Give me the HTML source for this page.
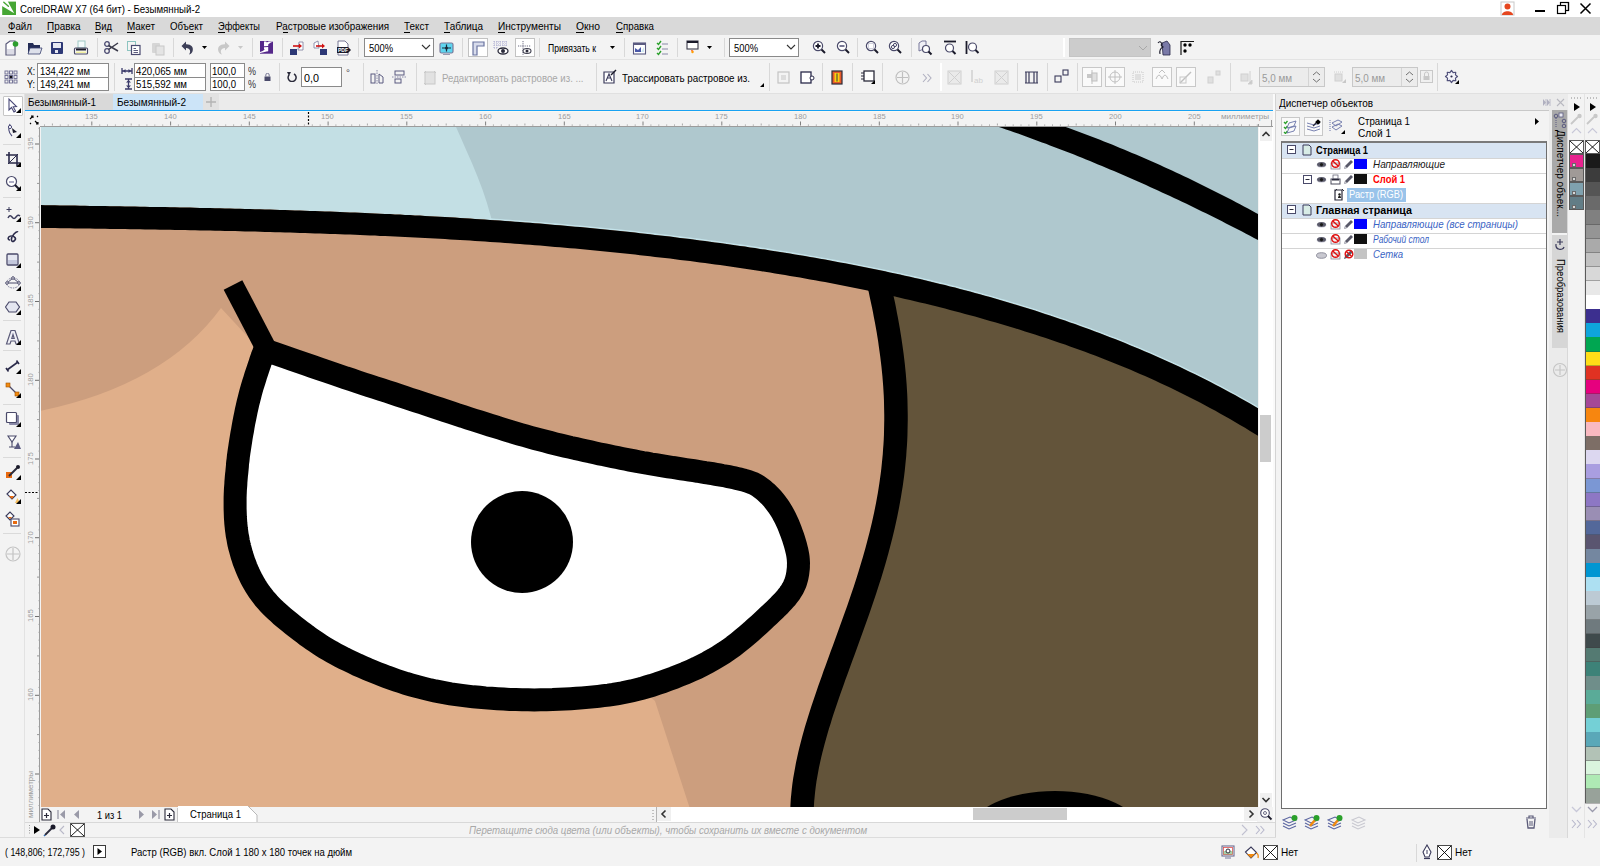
<!DOCTYPE html>
<html><head><meta charset="utf-8"><style>
html,body{margin:0;padding:0;}
body{width:1600px;height:866px;overflow:hidden;position:relative;background:#f3f3f3;font-family:"Liberation Sans",sans-serif;}
.r{position:absolute;}
.t{position:absolute;white-space:nowrap;transform-origin:0 0;}
u{text-decoration:underline;text-underline-offset:1px;}
</style></head><body>
<div class="r" style="left:0px;top:0px;width:1600px;height:17px;background:#fff;"></div>
<svg class="r" style="left:0px;top:0px;" width="18" height="17" viewBox="0 0 18 17"><rect x="2.2" y="1.6" width="13.8" height="13.4" fill="#46a634"/><path d="M1.5,1 L7.6,1 L14.2,13.3 L1.5,5.8 Z" fill="#fff"/><path d="M3.8,2.3 L8.4,6.2" stroke="#46a634" stroke-width="1.4" stroke-linecap="round"/></svg>
<div class="t" style="left:20px;top:3.61px;font-size:10.5px;line-height:10.5px;color:#000;font-weight:normal;font-style:normal;transform:scaleX(0.9223);">CorelDRAW X7 (64 бит) - Безымянный-2</div>
<svg class="r" style="left:1500px;top:1px;" width="16" height="15" viewBox="0 0 16 15"><rect x="1" y="1" width="13" height="13" fill="#fff" stroke="#c8c8c8"/><circle cx="7.5" cy="5.5" r="3" fill="#e5461f"/><path d="M2,14 C2,9 13,9 13,14 Z" fill="#e5461f"/></svg>
<div class="r" style="left:1535px;top:10px;width:10px;height:2px;background:#000;"></div>
<svg class="r" style="left:1555px;top:1px;" width="16" height="15" viewBox="0 0 16 15"><rect x="5.5" y="1.5" width="8" height="8" fill="#fff" stroke="#000" stroke-width="1.2"/><rect x="2.5" y="4.5" width="8" height="8" fill="#fff" stroke="#000" stroke-width="1.2"/><path d="M5.5,1.5 H13.5 V9.5" fill="none" stroke="#000" stroke-width="1.2"/></svg>
<svg class="r" style="left:1578px;top:1px;" width="16" height="15" viewBox="0 0 16 15"><path d="M2.5,2.5 L12.5,12.5 M12.5,2.5 L2.5,12.5" stroke="#000" stroke-width="1.5"/></svg>
<div class="r" style="left:0px;top:17px;width:1600px;height:18px;background:#d9d9d9;"></div>
<div class="t" style="left:7.5px;top:21.11px;font-size:10.5px;line-height:10.5px;color:#000;font-weight:normal;font-style:normal;transform:scaleX(0.9297);">Файл</div>
<div class="r" style="left:7.5px;top:31.5px;width:7.4px;height:1px;background:#000;"></div>
<div class="t" style="left:46.5px;top:21.11px;font-size:10.5px;line-height:10.5px;color:#000;font-weight:normal;font-style:normal;transform:scaleX(0.9445);">Правка</div>
<div class="r" style="left:46.5px;top:31.5px;width:7.1px;height:1px;background:#000;"></div>
<div class="t" style="left:95px;top:21.11px;font-size:10.5px;line-height:10.5px;color:#000;font-weight:normal;font-style:normal;transform:scaleX(0.8950);">Вид</div>
<div class="r" style="left:95.0px;top:31.5px;width:6.3px;height:1px;background:#000;"></div>
<div class="t" style="left:127px;top:21.11px;font-size:10.5px;line-height:10.5px;color:#000;font-weight:normal;font-style:normal;transform:scaleX(0.9423);">Макет</div>
<div class="r" style="left:127.0px;top:31.5px;width:8.2px;height:1px;background:#000;"></div>
<div class="t" style="left:170px;top:21.11px;font-size:10.5px;line-height:10.5px;color:#000;font-weight:normal;font-style:normal;transform:scaleX(0.9229);">Объект</div>
<div class="r" style="left:188.8px;top:31.5px;width:5.4px;height:1px;background:#000;"></div>
<div class="t" style="left:218px;top:21.11px;font-size:10.5px;line-height:10.5px;color:#000;font-weight:normal;font-style:normal;transform:scaleX(0.8799);">Эффекты</div>
<div class="r" style="left:218.0px;top:31.5px;width:6.6px;height:1px;background:#000;"></div>
<div class="t" style="left:276px;top:21.11px;font-size:10.5px;line-height:10.5px;color:#000;font-weight:normal;font-style:normal;transform:scaleX(0.9384);">Растровые изображения</div>
<div class="r" style="left:282.6px;top:31.5px;width:5.5px;height:1px;background:#000;"></div>
<div class="t" style="left:404px;top:21.11px;font-size:10.5px;line-height:10.5px;color:#000;font-weight:normal;font-style:normal;transform:scaleX(0.9458);">Текст</div>
<div class="r" style="left:404.0px;top:31.5px;width:6.1px;height:1px;background:#000;"></div>
<div class="t" style="left:444px;top:21.11px;font-size:10.5px;line-height:10.5px;color:#000;font-weight:normal;font-style:normal;transform:scaleX(0.9473);">Таблица</div>
<div class="r" style="left:444.0px;top:31.5px;width:6.1px;height:1px;background:#000;"></div>
<div class="t" style="left:498px;top:21.11px;font-size:10.5px;line-height:10.5px;color:#000;font-weight:normal;font-style:normal;transform:scaleX(0.9623);">Инструменты</div>
<div class="r" style="left:498.0px;top:31.5px;width:7.3px;height:1px;background:#000;"></div>
<div class="t" style="left:576px;top:21.11px;font-size:10.5px;line-height:10.5px;color:#000;font-weight:normal;font-style:normal;transform:scaleX(0.9837);">Окно</div>
<div class="r" style="left:576.0px;top:31.5px;width:8.0px;height:1px;background:#000;"></div>
<div class="t" style="left:616px;top:21.11px;font-size:10.5px;line-height:10.5px;color:#000;font-weight:normal;font-style:normal;transform:scaleX(0.9226);">Справка</div>
<div class="r" style="left:616.0px;top:31.5px;width:7.0px;height:1px;background:#000;"></div>
<div class="r" style="left:0px;top:35px;width:1600px;height:24px;background:#f3f3f3;"></div>
<div class="r" style="left:0px;top:59px;width:1600px;height:1px;background:#e3e3e3;"></div>
<svg class="r" style="left:4px;top:40px;" width="16" height="16" viewBox="0 0 16 16"><path d="M2,4 L6,1 L11,1 L11,15 L2,15 Z" fill="#fff" stroke="#5a5a7a" stroke-width="1.2"/><rect x="3" y="9" width="7" height="5" fill="#dcdce6"/><circle cx="11.5" cy="4" r="2.8" fill="#2e9e2e"/></svg>
<svg class="r" style="left:27px;top:40px;" width="16" height="16" viewBox="0 0 16 16"><path d="M1,3 L6,3 L7,5 L13,5 L13,14 L1,14 Z" fill="#232c55"/><path d="M3,8 L15,8 L13,14 L1,14 Z" fill="#dde0ea" stroke="#3a4270" stroke-width="0.8"/></svg>
<svg class="r" style="left:49px;top:40px;" width="16" height="16" viewBox="0 0 16 16"><rect x="2" y="2" width="12" height="12" rx="1" fill="#2d3876"/><rect x="4" y="3" width="8" height="5" fill="#e6e8f2"/><rect x="6" y="10" width="3" height="3" fill="#e6e8f2"/></svg>
<svg class="r" style="left:73px;top:40px;" width="16" height="16" viewBox="0 0 16 16"><rect x="5" y="1" width="7" height="7" fill="#f4fbfb" stroke="#9fc9c6" stroke-width="1"/><rect x="1.5" y="8" width="13" height="6" rx="1" fill="#fff" stroke="#4a4a66" stroke-width="1.2"/><rect x="3" y="8.5" width="10" height="2" fill="#1a1a2a"/><rect x="3" y="11.5" width="10" height="1.5" fill="#f2f0a0"/></svg>
<div class="r" style="left:97px;top:38px;width:1px;height:19px;background:#d8d8d8;"></div>
<svg class="r" style="left:103px;top:40px;" width="16" height="16" viewBox="0 0 16 16"><circle cx="4" cy="4" r="2.3" fill="none" stroke="#4a4a70" stroke-width="1.3"/><circle cx="4" cy="11" r="2.3" fill="none" stroke="#4a4a70" stroke-width="1.3"/><path d="M5.5,5.5 L15,11 M5.5,9.5 L15,3" stroke="#3a3a4a" stroke-width="1.5"/></svg>
<svg class="r" style="left:126px;top:40px;" width="16" height="16" viewBox="0 0 16 16"><rect x="1.5" y="1.5" width="8" height="9" fill="none" stroke="#8cc4c0" stroke-width="1"/><rect x="5.5" y="5.5" width="8.5" height="9" fill="#fff" stroke="#4a4a70" stroke-width="1.2"/><path d="M7.5,8.5 H10 M7.5,10.5 H12 M7.5,12.5 H12" stroke="#4a4a70" stroke-width="0.9"/></svg>
<svg class="r" style="left:150px;top:40px;" width="16" height="16" viewBox="0 0 16 16"><rect x="2" y="3" width="8" height="10" rx="1" fill="#d6d6d6"/><rect x="6" y="6" width="8" height="9" fill="#e4e4e4" stroke="#c8c8c8"/></svg>
<div class="r" style="left:173px;top:38px;width:1px;height:19px;background:#d8d8d8;"></div>
<svg class="r" style="left:180px;top:40px;" width="16" height="16" viewBox="0 0 16 16"><path d="M1.5,6 L6,1.5 L6,4.2 C11,4 14,7 12.5,11.5 C11.8,13.5 10,14.5 9,14.5 C11,12 10.5,8 6,8 L6,10.5 Z" fill="#3d3f58"/></svg>
<svg class="r" style="left:202px;top:46px;" width="5" height="3" viewBox="0 0 5 3"><path d="M0,0 L5,0 L2.5,3 Z" fill="#000"/></svg>
<svg class="r" style="left:215px;top:40px;" width="16" height="16" viewBox="0 0 16 16"><path d="M14.5,6 L10,1.5 L10,4.2 C5,4 2,7 3.5,11.5 C4.2,13.5 6,14.5 7,14.5 C5,12 5.5,8 10,8 L10,10.5 Z" fill="#c8c8c8"/></svg>
<svg class="r" style="left:238px;top:46px;" width="5" height="3" viewBox="0 0 5 3"><path d="M0,0 L5,0 L2.5,3 Z" fill="#c8c8c8"/></svg>
<div class="r" style="left:252px;top:38px;width:1px;height:19px;background:#d8d8d8;"></div>
<svg class="r" style="left:259px;top:40px;" width="16" height="16" viewBox="0 0 16 16"><rect x="1" y="1" width="13" height="12.7" fill="#55288a"/><path d="M5,1.4 L7.3,1.4 L7.8,2.6 L9.6,1.4 L14,1.2 L14,1.8 C11.5,2.4 10.2,3.4 9.2,4.6 L9.2,6 L5,6.2 Z" fill="#fff"/><path d="M5,7.2 L9.2,7 L9.2,11.2 C7,11.6 4.5,12.2 1,12.9 L1,11.9 C3,11.3 4.6,10.4 5.6,9.4 L5,8.8 Z" fill="#fff"/></svg>
<div class="r" style="left:282px;top:38px;width:1px;height:19px;background:#d8d8d8;"></div>
<svg class="r" style="left:289px;top:40px;" width="16" height="16" viewBox="0 0 16 16"><rect x="1" y="9" width="7" height="6" fill="#2d3876"/><path d="M10,2 L14,2 L14,10 L9,10 Z" fill="#fff" stroke="#7a7a9a" stroke-width="0.8"/><path d="M4,6 H11" stroke="#d01010" stroke-width="1.6"/><path d="M10,3.5 L13,6 L10,8.5 Z" fill="#d01010"/></svg>
<svg class="r" style="left:312px;top:40px;" width="16" height="16" viewBox="0 0 16 16"><path d="M2,3 L6,1 L7,8 L2,8 Z" fill="#fff" stroke="#7a7a9a" stroke-width="0.8"/><rect x="8" y="9" width="7" height="6" fill="#2d3876"/><path d="M4,6 H11" stroke="#d01010" stroke-width="1.6"/><path d="M10,3.5 L13,6 L10,8.5 Z" fill="#d01010"/></svg>
<svg class="r" style="left:336px;top:40px;" width="16" height="16" viewBox="0 0 16 16"><path d="M2,1 L9,1 L12,4 L12,15 L2,15 Z" fill="#fff" stroke="#6a6a8a" stroke-width="0.9"/><path d="M1,7 L12,7 L15,10 L12,13 L1,13 Z" fill="#1a1a2a"/><text x="2" y="12" font-size="5" fill="#fff" font-family="Liberation Sans" font-weight="bold">PDF</text></svg>
<div class="r" style="left:358px;top:38px;width:1px;height:19px;background:#d8d8d8;"></div>
<div class="r" style="left:364px;top:38px;width:70px;height:19px;background:#fff;box-sizing:border-box;border:1px solid #8a8a8a"></div>
<div class="t" style="left:369px;top:42.61px;font-size:10.5px;line-height:10.5px;color:#000;font-weight:normal;font-style:normal;transform:scaleX(0.8937);">500%</div>
<svg class="r" style="left:421px;top:44px;" width="10" height="7" viewBox="0 0 10 7"><path d="M1,1 L5,5 L9,1" fill="none" stroke="#333" stroke-width="1.1"/></svg>
<svg class="r" style="left:439px;top:41px;" width="16" height="16" viewBox="0 0 16 16"><rect x="1" y="2" width="13" height="10" rx="1.5" fill="#5fd5ef" stroke="#7a7a9a" stroke-width="1.2"/><path d="M7.5,3.5 V10.5 M3,7 H12" stroke="#1a2a3a" stroke-width="1.2"/><circle cx="7.5" cy="7" r="1.5" fill="#1a2a3a"/><rect x="4" y="13" width="7" height="1" fill="#9a9ab0"/></svg>
<div class="r" style="left:462px;top:38px;width:1px;height:19px;background:#d8d8d8;"></div>
<div class="r" style="left:468px;top:38px;width:20px;height:19px;background:#fff;box-sizing:border-box;border:1px solid #c2c2c2"></div>
<svg class="r" style="left:470px;top:40px;" width="16" height="16" viewBox="0 0 16 16"><path d="M3,2 H14 V6 H7 V15 H3 Z" fill="#d8dcec" stroke="#6a74a0" stroke-width="1.2"/></svg>
<svg class="r" style="left:493px;top:40px;" width="16" height="16" viewBox="0 0 16 16"><path d="M1,1 V9 M4,1 V8 M7,1 V7 M10,1 V6 M13,1 V6 M1,2 H14 M1,5 H14 M1,8 H5" stroke="#9a9ac8" stroke-width="0.8" stroke-dasharray="1,1"/><ellipse cx="10" cy="11" rx="5" ry="3" fill="#fff" stroke="#2a2a3a" stroke-width="1.3"/><circle cx="10" cy="11" r="2" fill="#2a2a3a"/></svg>
<div class="r" style="left:515px;top:38px;width:20px;height:19px;background:#fff;box-sizing:border-box;border:1px solid #c2c2c2"></div>
<svg class="r" style="left:517px;top:40px;" width="16" height="16" viewBox="0 0 16 16"><path d="M6,1 V15 M1,6 H14" stroke="#6a6a80" stroke-width="1" stroke-dasharray="1.2,1"/><ellipse cx="10" cy="11" rx="4" ry="2.5" fill="#fff" stroke="#3a3a4a" stroke-width="1.1"/><circle cx="10" cy="11" r="1.5" fill="#2a2a3a"/></svg>
<div class="r" style="left:539px;top:38px;width:1px;height:19px;background:#d8d8d8;"></div>
<div class="t" style="left:548px;top:42.61px;font-size:10.5px;line-height:10.5px;color:#000;font-weight:normal;font-style:normal;transform:scaleX(0.8190);">Привязать к</div>
<svg class="r" style="left:610px;top:46px;" width="5" height="3" viewBox="0 0 5 3"><path d="M0,0 L5,0 L2.5,3 Z" fill="#000"/></svg>
<div class="r" style="left:624px;top:38px;width:1px;height:19px;background:#d8d8d8;"></div>
<svg class="r" style="left:632px;top:41px;" width="16" height="16" viewBox="0 0 16 16"><rect x="1.5" y="2" width="12" height="11" fill="#fff" stroke="#5a5a80" stroke-width="1.1"/><rect x="1.5" y="2" width="12" height="2" fill="#5a5a80"/><path d="M3,11 V7 L6,9 L9,6 L9,11 Z" fill="#4a58a8"/><path d="M9,11 L12,6 L12,11 Z" fill="#cfe8f0"/></svg>
<svg class="r" style="left:656px;top:40px;" width="16" height="16" viewBox="0 0 16 16"><path d="M1,3 L2.5,4.5 L5,1 M1,8 L2.5,9.5 L5,6 M1,13 L2.5,14.5 L5,11" stroke="#2aa02a" stroke-width="1.4" fill="none"/><path d="M6,4 H12 M6,9 H12 M6,14 H12" stroke="#8a8aa8" stroke-width="1.2"/></svg>
<div class="r" style="left:677px;top:38px;width:1px;height:19px;background:#d8d8d8;"></div>
<svg class="r" style="left:685px;top:40px;" width="16" height="16" viewBox="0 0 16 16"><rect x="2" y="1" width="11" height="8" fill="#fff" stroke="#3a3a4a" stroke-width="1.1"/><rect x="2" y="1" width="11" height="2" fill="#1a1a2a"/><path d="M6,10 Q7.5,14 9,10 Q8,12 7.5,10 Z" fill="#ff5010"/><circle cx="7.5" cy="12" r="1.2" fill="#ffa000"/></svg>
<svg class="r" style="left:707px;top:46px;" width="5" height="3" viewBox="0 0 5 3"><path d="M0,0 L5,0 L2.5,3 Z" fill="#000"/></svg>
<div class="r" style="left:724px;top:38px;width:1px;height:19px;background:#d8d8d8;"></div>
<div class="r" style="left:729px;top:38px;width:70px;height:19px;background:#fff;box-sizing:border-box;border:1px solid #8a8a8a"></div>
<div class="t" style="left:734px;top:42.61px;font-size:10.5px;line-height:10.5px;color:#000;font-weight:normal;font-style:normal;transform:scaleX(0.8937);">500%</div>
<svg class="r" style="left:786px;top:44px;" width="10" height="7" viewBox="0 0 10 7"><path d="M1,1 L5,5 L9,1" fill="none" stroke="#333" stroke-width="1.1"/></svg>
<svg class="r" style="left:812px;top:40px;" width="16" height="16" viewBox="0 0 16 16"><circle cx="6" cy="6" r="4.6" fill="#fff" stroke="#4a4a6a" stroke-width="1.2"/><path d="M6,3.5 V8.5 M3.5,6 H8.5" stroke="#1a1a2a" stroke-width="1.8"/><path d="M9.5,9.5 L13,13" stroke="#1a1a2a" stroke-width="2"/></svg>
<svg class="r" style="left:836px;top:40px;" width="16" height="16" viewBox="0 0 16 16"><circle cx="6" cy="6" r="4.6" fill="#fff" stroke="#4a4a6a" stroke-width="1.2"/><path d="M3.5,6 H8.5" stroke="#6a6a8a" stroke-width="1.8"/><path d="M9.5,9.5 L13,13" stroke="#1a1a2a" stroke-width="2"/></svg>
<div class="r" style="left:857px;top:38px;width:1px;height:19px;background:#d8d8d8;"></div>
<svg class="r" style="left:865px;top:40px;" width="16" height="16" viewBox="0 0 16 16"><circle cx="6" cy="6" r="4.6" fill="#fff" stroke="#4a4a6a" stroke-width="1.2"/><rect x="3.5" y="3.5" width="5" height="5" fill="none" stroke="#8a8aa8" stroke-width="0.8" stroke-dasharray="1,1"/><path d="M9.5,9.5 L13,13" stroke="#1a1a2a" stroke-width="2"/></svg>
<svg class="r" style="left:888px;top:40px;" width="16" height="16" viewBox="0 0 16 16"><circle cx="6" cy="6" r="4.6" fill="#fff" stroke="#4a4a6a" stroke-width="1.2"/><circle cx="5" cy="7" r="1.6" fill="none" stroke="#4a4a6a"/><circle cx="7" cy="5" r="1.6" fill="none" stroke="#4a4a6a"/><path d="M9.5,9.5 L13,13" stroke="#1a1a2a" stroke-width="2"/></svg>
<div class="r" style="left:911px;top:38px;width:1px;height:19px;background:#d8d8d8;"></div>
<svg class="r" style="left:918px;top:40px;" width="16" height="16" viewBox="0 0 16 16"><path d="M1,3 L4,1 L8,1 L8,8 L1,11 Z" fill="#f0f0f6" stroke="#6a6a90" stroke-width="0.9"/><circle cx="8" cy="9" r="3.5" fill="#fff" stroke="#4a4a6a" stroke-width="1.2"/><path d="M10.5,11.5 L13.5,14.5" stroke="#1a1a2a" stroke-width="2"/></svg>
<svg class="r" style="left:943px;top:40px;" width="16" height="16" viewBox="0 0 16 16"><path d="M1,1.5 H13" stroke="#1a1a2a" stroke-width="1.8"/><circle cx="6.5" cy="8" r="4" fill="#fff" stroke="#4a4a6a" stroke-width="1.2"/><path d="M9.5,11 L12.5,14" stroke="#1a1a2a" stroke-width="2"/></svg>
<svg class="r" style="left:965px;top:40px;" width="16" height="16" viewBox="0 0 16 16"><path d="M1.5,1 V14" stroke="#1a1a2a" stroke-width="1.8"/><circle cx="7.5" cy="7" r="4" fill="#fff" stroke="#4a4a6a" stroke-width="1.2"/><path d="M10.5,10 L13.5,13" stroke="#1a1a2a" stroke-width="2"/></svg>
<div class="r" style="left:1063px;top:38px;width:2px;height:19px;background:#fff;"></div>
<div class="r" style="left:1069px;top:38px;width:82px;height:19px;background:#cccccc;box-sizing:border-box;border:1px solid #c4c4c4"></div>
<svg class="r" style="left:1138px;top:45px;" width="10" height="6" viewBox="0 0 10 6"><path d="M1,1 L5,5 L9,1" fill="none" stroke="#a8a8a8" stroke-width="1"/></svg>
<svg class="r" style="left:1157px;top:40px;" width="16" height="16" viewBox="0 0 16 16"><path d="M5,3 L10,1 L13,5 L13,15 L6,15 Z" fill="#7a7aa8" stroke="#2a2a4a" stroke-width="0.8"/><path d="M1,3 Q3,0 5,4 Q3,5 6,7 Q2,9 3,14" fill="none" stroke="#1a1a2a" stroke-width="1.1"/></svg>
<svg class="r" style="left:1180px;top:40px;" width="16" height="16" viewBox="0 0 16 16"><path d="M1,15 V1.5 H14" fill="none" stroke="#1a1a1a" stroke-width="1.2"/><circle cx="5" cy="5" r="1.7" fill="#000"/><circle cx="10" cy="5" r="1.7" fill="#000"/><circle cx="5" cy="11" r="1.7" fill="#000"/></svg>
<div class="r" style="left:0px;top:60px;width:1600px;height:33px;background:#f3f3f3;"></div>
<div class="r" style="left:0px;top:93px;width:1600px;height:1px;background:#e0e0e0;"></div>
<svg class="r" style="left:4px;top:70px;" width="15" height="15" viewBox="0 0 15 15"><rect x="1.0" y="1.0" width="3" height="3" fill="none" stroke="#6a6a90" stroke-width="0.9"/><rect x="1.0" y="5.5" width="3" height="3" fill="none" stroke="#6a6a90" stroke-width="0.9"/><rect x="1.0" y="10.0" width="3" height="3" fill="none" stroke="#6a6a90" stroke-width="0.9"/><rect x="5.5" y="1.0" width="3" height="3" fill="none" stroke="#6a6a90" stroke-width="0.9"/><rect x="5.5" y="5.5" width="3" height="3" fill="#111" stroke="#6a6a90" stroke-width="0.9"/><rect x="5.5" y="10.0" width="3" height="3" fill="none" stroke="#6a6a90" stroke-width="0.9"/><rect x="10.0" y="1.0" width="3" height="3" fill="none" stroke="#6a6a90" stroke-width="0.9"/><rect x="10.0" y="5.5" width="3" height="3" fill="none" stroke="#6a6a90" stroke-width="0.9"/><rect x="10.0" y="10.0" width="3" height="3" fill="none" stroke="#6a6a90" stroke-width="0.9"/></svg>
<div class="t" style="left:27px;top:65.61px;font-size:10.5px;line-height:10.5px;color:#000;font-weight:normal;font-style:normal;transform:scaleX(0.8064);">X:</div>
<div class="t" style="left:27px;top:79.11px;font-size:10.5px;line-height:10.5px;color:#000;font-weight:normal;font-style:normal;transform:scaleX(0.8564);">Y:</div>
<div class="r" style="left:37px;top:63px;width:72px;height:28px;background:#fff;box-sizing:border-box;border:1px solid #8a8a8a"></div>
<div class="r" style="left:38px;top:76.5px;width:70px;height:1px;background:#8a8a8a;"></div>
<div class="t" style="left:40px;top:65.61px;font-size:10.5px;line-height:10.5px;color:#000;font-weight:normal;font-style:normal;transform:scaleX(0.9041);">134,422 мм</div>
<div class="t" style="left:40px;top:79.11px;font-size:10.5px;line-height:10.5px;color:#000;font-weight:normal;font-style:normal;transform:scaleX(0.9041);">149,241 мм</div>
<div class="r" style="left:114px;top:63px;width:1px;height:28px;background:#d8d8d8;"></div>
<svg class="r" style="left:121px;top:66px;" width="12" height="9" viewBox="0 0 12 9"><path d="M1,2 V8 M11,2 V8 M1,5 H11" stroke="#3a3a6a" stroke-width="1.3"/><path d="M2,5 L4.5,3 V7 Z M10,5 L7.5,3 V7 Z" fill="#3a3a6a"/></svg>
<svg class="r" style="left:124px;top:78px;" width="9" height="12" viewBox="0 0 9 12"><path d="M1,1 H8 M1,11 H8 M4.5,1 V11" stroke="#3a3a6a" stroke-width="1.3"/><path d="M4.5,2 L2,4.5 H7 Z M4.5,10 L2,7.5 H7 Z" fill="#3a3a6a"/></svg>
<div class="r" style="left:134px;top:63px;width:72px;height:28px;background:#fff;box-sizing:border-box;border:1px solid #8a8a8a"></div>
<div class="r" style="left:135px;top:76.5px;width:70px;height:1px;background:#8a8a8a;"></div>
<div class="t" style="left:136px;top:65.61px;font-size:10.5px;line-height:10.5px;color:#000;font-weight:normal;font-style:normal;transform:scaleX(0.9222);">420,065 мм</div>
<div class="t" style="left:136px;top:79.11px;font-size:10.5px;line-height:10.5px;color:#000;font-weight:normal;font-style:normal;transform:scaleX(0.9222);">515,592 мм</div>
<div class="r" style="left:210px;top:63px;width:35px;height:28px;background:#fff;box-sizing:border-box;border:1px solid #8a8a8a"></div>
<div class="r" style="left:211px;top:76.5px;width:33px;height:1px;background:#8a8a8a;"></div>
<div class="t" style="left:212px;top:65.61px;font-size:10.5px;line-height:10.5px;color:#000;font-weight:normal;font-style:normal;transform:scaleX(0.9135);">100,0</div>
<div class="t" style="left:212px;top:79.11px;font-size:10.5px;line-height:10.5px;color:#000;font-weight:normal;font-style:normal;transform:scaleX(0.9135);">100,0</div>
<div class="t" style="left:248px;top:65.61px;font-size:10.5px;line-height:10.5px;color:#333;font-weight:normal;font-style:normal;transform:scaleX(0.8568);">%</div>
<div class="t" style="left:248px;top:79.11px;font-size:10.5px;line-height:10.5px;color:#333;font-weight:normal;font-style:normal;transform:scaleX(0.8568);">%</div>
<svg class="r" style="left:264px;top:73px;" width="8" height="9" viewBox="0 0 8 9"><rect x="0.5" y="3.5" width="6" height="4.5" fill="#4a4a6a"/><path d="M1.8,3.5 V2 A1.7,1.7 0 0 1 5.2,2 V3.5" fill="none" stroke="#6a6a8a" stroke-width="0.9"/></svg>
<div class="r" style="left:279px;top:63px;width:1px;height:28px;background:#d8d8d8;"></div>
<svg class="r" style="left:286px;top:71px;" width="11" height="11" viewBox="0 0 11 11"><path d="M3,4 A4,4 0 1 0 8,3" fill="none" stroke="#2a2a3a" stroke-width="1.5"/><path d="M1,1 L5,1 L3,5 Z" fill="#2a2a3a"/></svg>
<div class="r" style="left:301px;top:67px;width:41px;height:20px;background:#fff;box-sizing:border-box;border:1px solid #8a8a8a"></div>
<div class="t" style="left:304px;top:72.61px;font-size:10.5px;line-height:10.5px;color:#000;font-weight:normal;font-style:normal;transform:scaleX(1.0277);">0,0</div>
<div class="t" style="left:346px;top:69.38px;font-size:9px;line-height:9px;color:#444;font-weight:normal;font-style:normal;transform:scaleX(1.1115);">°</div>
<div class="r" style="left:363px;top:63px;width:1px;height:28px;background:#d8d8d8;"></div>
<svg class="r" style="left:370px;top:70px;" width="15" height="15" viewBox="0 0 15 15"><path d="M7,0 V15" stroke="#8a8aa8" stroke-dasharray="1.5,1"/><rect x="1" y="4" width="4" height="9" fill="none" stroke="#5a5a80"/><path d="M9,13 V4 L13,7 V13 Z" fill="none" stroke="#5a5a80"/></svg>
<svg class="r" style="left:392px;top:70px;" width="15" height="15" viewBox="0 0 15 15"><path d="M0,7 H14" stroke="#8a8aa8" stroke-dasharray="1.5,1"/><rect x="3" y="1" width="9" height="4" fill="none" stroke="#5a5a80"/><rect x="3" y="9" width="6" height="4" fill="none" stroke="#5a5a80"/></svg>
<div class="r" style="left:416px;top:63px;width:1px;height:28px;background:#d8d8d8;"></div>
<svg class="r" style="left:423px;top:70px;" width="16" height="16" viewBox="0 0 16 16"><rect x="2" y="2" width="10" height="12" fill="#e2e2e2" stroke="#c8c8c8"/><path d="M1,3 L3,1 M11,1 L13,3 M1,13 L3,15" stroke="#c8c8c8"/></svg>
<div class="t" style="left:441.5px;top:72.61px;font-size:10.5px;line-height:10.5px;color:#a8a8a8;font-weight:normal;font-style:normal;transform:scaleX(0.9178);">Редактировать растровое из. ...</div>
<div class="r" style="left:596px;top:63px;width:1px;height:28px;background:#d8d8d8;"></div>
<svg class="r" style="left:602px;top:69px;" width="16" height="16" viewBox="0 0 16 16"><path d="M2,3 L12,3 L12,14 L2,14 Z" fill="#fff" stroke="#3a3a5a" stroke-width="1.2"/><path d="M4,12 L7,5 L10,12 M5,9 H9" stroke="#3a3a5a" stroke-width="1.1" fill="none"/><path d="M9,6 L14,1" stroke="#1a1a2a" stroke-width="1.4"/></svg>
<div class="t" style="left:622px;top:72.61px;font-size:10.5px;line-height:10.5px;color:#000;font-weight:normal;font-style:normal;transform:scaleX(0.9352);">Трассировать растровое из.</div>
<svg class="r" style="left:760px;top:83px;" width="4" height="4" viewBox="0 0 4 4"><path d="M4,0 L4,4 L0,4 Z" fill="#000"/></svg>
<div class="r" style="left:769px;top:63px;width:1px;height:28px;background:#d8d8d8;"></div>
<svg class="r" style="left:776px;top:70px;" width="16" height="16" viewBox="0 0 16 16"><rect x="2" y="2" width="11" height="11" fill="none" stroke="#c4c4c4" stroke-width="1.2"/><rect x="5" y="5" width="5" height="5" fill="#dcdcdc"/></svg>
<svg class="r" style="left:800px;top:70px;" width="16" height="16" viewBox="0 0 16 16"><rect x="1" y="2" width="10" height="11" fill="#fff" stroke="#2a2a4a" stroke-width="1.3"/><circle cx="12" cy="8" r="2" fill="#fff" stroke="#2a2a4a"/></svg>
<div class="r" style="left:822px;top:63px;width:1px;height:28px;background:#d8d8d8;"></div>
<svg class="r" style="left:831px;top:70px;" width="16" height="16" viewBox="0 0 16 16"><rect x="1" y="1" width="10" height="13" fill="#e85a2a" stroke="#2a2a3a" stroke-width="1.2"/><rect x="3.5" y="3" width="5" height="9" fill="#f8d010"/><path d="M6,3.5 V11.5" stroke="#3a3a3a"/></svg>
<div class="r" style="left:852px;top:63px;width:1px;height:28px;background:#d8d8d8;"></div>
<svg class="r" style="left:860px;top:69px;" width="16" height="16" viewBox="0 0 16 16"><rect x="4" y="2" width="10" height="10" fill="#fff" stroke="#2a2a3a" stroke-width="1.3"/><path d="M1,4 H4 M1,7 H4 M1,10 H4" stroke="#2a2a3a"/><path d="M11,15 L15,11 L15,15 Z" fill="#000"/></svg>
<div class="r" style="left:882px;top:63px;width:1px;height:28px;background:#d8d8d8;"></div>
<svg class="r" style="left:895px;top:70px;" width="16" height="16" viewBox="0 0 16 16"><circle cx="7.5" cy="7.5" r="6.5" fill="none" stroke="#c0c0c0" stroke-width="1.2"/><path d="M7.5,2 V13 M2,7.5 H13" stroke="#c0c0c0" stroke-width="1.2"/></svg>
<svg class="r" style="left:922px;top:72px;" width="10" height="12" viewBox="0 0 10 12"><path d="M1,2 L4.5,6 L1,10 M5.5,2 L9,6 L5.5,10" fill="none" stroke="#b0b0c0" stroke-width="1.1"/></svg>
<div class="r" style="left:940px;top:63px;width:2px;height:28px;background:#fff;"></div>
<svg class="r" style="left:947px;top:70px;" width="16" height="16" viewBox="0 0 16 16"><rect x="1" y="1" width="13" height="13" fill="#eaeaea" stroke="#d0d0d0"/><path d="M2,2 L13,13 M13,2 L2,13" stroke="#d0d0d0"/></svg>
<svg class="r" style="left:970px;top:69px;" width="16" height="16" viewBox="0 0 16 16"><path d="M2,1 V13" stroke="#d0d0d0" stroke-width="1.5"/><text x="4" y="14" font-size="8" fill="#d0d0d0" font-family="Liberation Sans">ab</text></svg>
<svg class="r" style="left:994px;top:70px;" width="16" height="16" viewBox="0 0 16 16"><rect x="1" y="1" width="13" height="13" fill="#eaeaea" stroke="#d0d0d0"/><path d="M2,2 L13,13 M13,2 L2,13" stroke="#d0d0d0"/></svg>
<div class="r" style="left:1017px;top:63px;width:1px;height:28px;background:#d8d8d8;"></div>
<svg class="r" style="left:1024px;top:70px;" width="16" height="16" viewBox="0 0 16 16"><path d="M1,2 H14 M1,13 H14 M2,2 V13 M5,2 V13 M10,2 V13 M13,2 V13" stroke="#3a3a5a" stroke-width="1.2"/></svg>
<div class="r" style="left:1047px;top:63px;width:1px;height:28px;background:#d8d8d8;"></div>
<svg class="r" style="left:1054px;top:69px;" width="16" height="16" viewBox="0 0 16 16"><rect x="1" y="7" width="6" height="6" fill="none" stroke="#3a3a5a" stroke-width="1.1"/><rect x="9" y="1" width="5" height="5" fill="none" stroke="#3a3a5a" stroke-width="1.1"/></svg>
<div class="r" style="left:1077px;top:63px;width:1px;height:28px;background:#d8d8d8;"></div>
<div class="r" style="left:1082px;top:67px;width:20px;height:20px;background:#fafafa;box-sizing:border-box;border:1px solid #c8c8c8"></div>
<svg class="r" style="left:1084px;top:69px;" width="16" height="16" viewBox="0 0 16 16"><path d="M8,1 V15" stroke="#c0c0c0"/><rect x="3" y="5" width="5" height="4" fill="#c8c8c8"/><rect x="8" y="4" width="5" height="8" fill="#e0e0e0" stroke="#c0c0c0"/></svg>
<div class="r" style="left:1105px;top:67px;width:20px;height:20px;background:#fafafa;box-sizing:border-box;border:1px solid #c8c8c8"></div>
<svg class="r" style="left:1107px;top:69px;" width="16" height="16" viewBox="0 0 16 16"><circle cx="8" cy="8" r="5" fill="none" stroke="#c0c0c0"/><path d="M8,1 V15 M1,8 H15" stroke="#c0c0c0"/></svg>
<div class="r" style="left:1152px;top:67px;width:20px;height:20px;background:#fafafa;box-sizing:border-box;border:1px solid #c8c8c8"></div>
<svg class="r" style="left:1154px;top:69px;" width="16" height="16" viewBox="0 0 16 16"><path d="M2,10 Q5,2 8,10 Q11,2 14,10" fill="none" stroke="#c0c0c0"/><path d="M5,4 L8,1 L11,4" fill="none" stroke="#c0c0c0"/></svg>
<div class="r" style="left:1176px;top:67px;width:20px;height:20px;background:#fafafa;box-sizing:border-box;border:1px solid #c8c8c8"></div>
<svg class="r" style="left:1178px;top:69px;" width="16" height="16" viewBox="0 0 16 16"><path d="M2,14 L13,3" stroke="#c0c0c0" stroke-width="1.5"/><rect x="2" y="8" width="6" height="6" fill="none" stroke="#c8c8c8"/></svg>
<svg class="r" style="left:1130px;top:69px;" width="16" height="16" viewBox="0 0 16 16"><rect x="3" y="3" width="10" height="10" fill="none" stroke="#c8c8c8" stroke-dasharray="1,1"/><rect x="5" y="5" width="6" height="6" fill="#e0e0e0"/></svg>
<svg class="r" style="left:1207px;top:69px;" width="16" height="16" viewBox="0 0 16 16"><rect x="1" y="8" width="5" height="6" fill="#e0e0e0" stroke="#d0d0d0"/><rect x="9" y="2" width="4" height="4" fill="#e0e0e0" stroke="#d0d0d0"/></svg>
<div class="r" style="left:1230px;top:63px;width:1px;height:28px;background:#d8d8d8;"></div>
<svg class="r" style="left:1239px;top:70px;" width="16" height="16" viewBox="0 0 16 16"><rect x="2" y="4" width="7" height="7" fill="#e0e0e0" stroke="#d0d0d0"/><path d="M11,1 V12 M9,14 L13,10 V14 Z" stroke="#d0d0d0" fill="#c8c8c8"/></svg>
<div class="r" style="left:1259px;top:67px;width:66px;height:20px;background:#ececec;box-sizing:border-box;border:1px solid #c8c8c8"></div>
<div class="r" style="left:1308px;top:68px;width:1px;height:18px;background:#d4d4d4;"></div>
<div class="t" style="left:1262px;top:72.61px;font-size:10.5px;line-height:10.5px;color:#9a9a9a;font-weight:normal;font-style:normal;transform:scaleX(0.9390);">5,0 мм</div>
<svg class="r" style="left:1310px;top:69px;" width="13" height="16" viewBox="0 0 13 16"><path d="M3,6 L6.5,3 L10,6 M3,10 L6.5,13 L10,10" fill="none" stroke="#707070" stroke-width="1"/></svg>
<svg class="r" style="left:1332px;top:69px;" width="16" height="16" viewBox="0 0 16 16"><path d="M2,3 H11" stroke="#d0d0d0" stroke-dasharray="1,1"/><rect x="3" y="5" width="7" height="7" fill="#e0e0e0" stroke="#d0d0d0"/><path d="M10,14 L14,10 V14 Z" fill="#c8c8c8"/></svg>
<div class="r" style="left:1352px;top:67px;width:66px;height:20px;background:#ececec;box-sizing:border-box;border:1px solid #c8c8c8"></div>
<div class="r" style="left:1401px;top:68px;width:1px;height:18px;background:#d4d4d4;"></div>
<div class="t" style="left:1355px;top:72.61px;font-size:10.5px;line-height:10.5px;color:#9a9a9a;font-weight:normal;font-style:normal;transform:scaleX(0.9390);">5,0 мм</div>
<svg class="r" style="left:1403px;top:69px;" width="13" height="16" viewBox="0 0 13 16"><path d="M3,6 L6.5,3 L10,6 M3,10 L6.5,13 L10,10" fill="none" stroke="#707070" stroke-width="1"/></svg>
<svg class="r" style="left:1420px;top:70px;" width="13" height="13" viewBox="0 0 13 13"><rect x="0.5" y="0.5" width="12" height="12" fill="#f0f0f0" stroke="#c8c8c8"/><rect x="3.5" y="6" width="6" height="4" fill="#c8c8c8"/><path d="M4.5,6 V4 A2,2 0 0 1 8.5,4 V6" fill="none" stroke="#c8c8c8"/></svg>
<div class="r" style="left:1437px;top:63px;width:1px;height:28px;background:#d8d8d8;"></div>
<svg class="r" style="left:1444px;top:69px;" width="16" height="16" viewBox="0 0 16 16"><path d="M13.50,7.50 L11.47,9.15 L11.74,11.74 L9.15,11.47 L7.50,13.50 L5.85,11.47 L3.26,11.74 L3.53,9.15 L1.50,7.50 L3.53,5.85 L3.26,3.26 L5.85,3.53 L7.50,1.50 L9.15,3.53 L11.74,3.26 L11.47,5.85 Z" fill="#f4f4fa" stroke="#50507a" stroke-width="1.2" stroke-linejoin="round"/><circle cx="7.5" cy="7.5" r="1.1" fill="#2a2a4a"/><path d="M11,15 L15,11 V15 Z" fill="#000"/></svg>
<div class="r" style="left:0px;top:94px;width:24px;height:744px;background:#f3f3f3;"></div>
<div class="r" style="left:24px;top:94px;width:1px;height:744px;background:#e2e2e2;"></div>
<div class="r" style="left:3px;top:96px;width:20px;height:20px;background:#fff;box-sizing:border-box;border:1px solid #c6c6c6;border-radius:1px"></div>
<svg class="r" style="left:5px;top:97px;" width="17" height="17" viewBox="0 0 17 17"><path d="M4,2 L4,13 L6.5,10.5 L9,15 L10.5,14 L8.2,9.7 L11.5,9.5 Z" fill="#fff" stroke="#4a4a78" stroke-width="1.1"/><path d="M16,11 L16,16 L11,16 Z" fill="#000"/></svg>
<svg class="r" style="left:5px;top:122px;" width="17" height="17" viewBox="0 0 17 17"><path d="M5,2 C3,6 3,10 7,14" fill="none" stroke="#4a4a78" stroke-width="1.1"/><circle cx="5" cy="5" r="1.6" fill="#fff" stroke="#4a4a78"/><path d="M7,6 L12,10 L8,11 Z" fill="#1a1a2a"/><path d="M16,11 L16,16 L11,16 Z" fill="#000"/></svg>
<svg class="r" style="left:5px;top:151px;" width="17" height="17" viewBox="0 0 17 17"><path d="M4,1 V12 H15 M1,4 H12 V15" fill="none" stroke="#2a2a4a" stroke-width="1.6"/><path d="M3,13 L13,3" stroke="#2a2a4a" stroke-width="1"/><path d="M16,11 L16,16 L11,16 Z" fill="#000"/></svg>
<svg class="r" style="left:5px;top:175px;" width="17" height="17" viewBox="0 0 17 17"><circle cx="6.5" cy="6.5" r="5" fill="#fff" stroke="#4a4a6a" stroke-width="1.2"/><path d="M4,7 H9" stroke="#9a9ab8" stroke-width="1.6"/><path d="M10,10 L14,14" stroke="#1a1a2a" stroke-width="2"/><path d="M16,11 L16,16 L11,16 Z" fill="#000"/></svg>
<svg class="r" style="left:5px;top:206px;" width="17" height="17" viewBox="0 0 17 17"><path d="M4,1 V6 M1.5,3.5 H6.5" stroke="#3a3a5a" stroke-width="1"/><path d="M3,12 Q5,8 7,11 T11,11 T15,10" fill="none" stroke="#3a3a5a" stroke-width="1.4"/><path d="M16,11 L16,16 L11,16 Z" fill="#000"/></svg>
<svg class="r" style="left:5px;top:228px;" width="17" height="17" viewBox="0 0 17 17"><path d="M5,12 C2,12 3,8 6,8 C10,8 12,11 9,13 C6,15 5,10 9,6 C11,4 12,3 13,4" fill="none" stroke="#2a2a4a" stroke-width="1.6"/></svg>
<svg class="r" style="left:5px;top:252px;" width="17" height="17" viewBox="0 0 17 17"><rect x="2" y="2" width="11" height="11" rx="1" fill="#e4e6f0" stroke="#4a4a6a" stroke-width="1.3"/><rect x="3" y="8" width="9" height="4" fill="#c4c8dc"/><path d="M16,11 L16,16 L11,16 Z" fill="#000"/></svg>
<svg class="r" style="left:5px;top:275px;" width="17" height="17" viewBox="0 0 17 17"><ellipse cx="8" cy="8" rx="6.5" ry="5" fill="none" stroke="#7a7a98" stroke-width="1" stroke-dasharray="1.5,1"/><path d="M2,8 L8,3 L14,8 Z" fill="none" stroke="#4a4a6a"/><circle cx="8" cy="3" r="1.3" fill="#fff" stroke="#4a4a6a"/><circle cx="2" cy="8" r="1.3" fill="#fff" stroke="#4a4a6a"/><circle cx="14" cy="8" r="1.3" fill="#fff" stroke="#4a4a6a"/><path d="M16,11 L16,16 L11,16 Z" fill="#000"/></svg>
<svg class="r" style="left:5px;top:299px;" width="17" height="17" viewBox="0 0 17 17"><path d="M4,3 H11 L14.5,8 L11,13 H4 L0.5,8 Z" fill="#e4e6f0" stroke="#4a4a6a" stroke-width="1.2"/><path d="M16,11 L16,16 L11,16 Z" fill="#000"/></svg>
<svg class="r" style="left:5px;top:329px;" width="17" height="17" viewBox="0 0 17 17"><path d="M1.5,15 L6,1.5 H10 L14.5,15 H11 L10,12 H6 L5,15 Z M6.8,9.5 H9.2 L8,5.5 Z" fill="#f0f0f6" stroke="#5a5a78" stroke-width="1.2"/><path d="M16,11 L16,16 L11,16 Z" fill="#000"/></svg>
<svg class="r" style="left:5px;top:358px;" width="17" height="17" viewBox="0 0 17 17"><path d="M2,12 L13,4" stroke="#2a2a4a" stroke-width="1.6"/><path d="M1,10 L3.5,13.5 M11.5,2.5 L14,6" stroke="#2a2a4a" stroke-width="1.6"/><path d="M16,11 L16,16 L11,16 Z" fill="#000"/></svg>
<svg class="r" style="left:5px;top:382px;" width="17" height="17" viewBox="0 0 17 17"><path d="M3,3 L12,12" stroke="#4a4a6a" stroke-width="1.2"/><rect x="1" y="1" width="4" height="4" fill="#f08a10" stroke="#a05000" stroke-width="0.6"/><rect x="10" y="10" width="4" height="4" fill="#f08a10" stroke="#a05000" stroke-width="0.6"/><path d="M16,11 L16,16 L11,16 Z" fill="#000"/></svg>
<svg class="r" style="left:5px;top:411px;" width="17" height="17" viewBox="0 0 17 17"><rect x="4" y="4" width="10" height="10" rx="1" fill="#8a8aa8"/><rect x="1.5" y="1.5" width="10" height="10" rx="1" fill="#fff" stroke="#4a4a6a" stroke-width="1.2"/><path d="M16,11 L16,16 L11,16 Z" fill="#000"/></svg>
<svg class="r" style="left:5px;top:434px;" width="17" height="17" viewBox="0 0 17 17"><path d="M3,2 L11,2 L7,8 Z" fill="#fff" stroke="#4a4a6a" stroke-width="1.1"/><path d="M7,8 V13 M4,13 H10" stroke="#4a4a6a" stroke-width="1.1"/><path d="M9,15 L13,8 L16,15 Z" fill="#5a5a80"/></svg>
<svg class="r" style="left:5px;top:464px;" width="17" height="17" viewBox="0 0 17 17"><rect x="1" y="8" width="6" height="6" fill="#e86a10"/><path d="M4,12 L12,4" stroke="#2a2a3a" stroke-width="2"/><circle cx="13" cy="3" r="2" fill="#1a1a2a"/><path d="M16,11 L16,16 L11,16 Z" fill="#000"/></svg>
<svg class="r" style="left:5px;top:488px;" width="17" height="17" viewBox="0 0 17 17"><path d="M2,6 L6,2 L11,7 L7,11 Z" fill="#fff" stroke="#3a3a5a" stroke-width="1.1"/><path d="M4,8 L9,8 L7,11 Z" fill="#e86a10"/><path d="M10,15 L12.5,10 L15,15 Z" fill="#f8c060"/><path d="M16,11 L16,16 L11,16 Z" fill="#000"/></svg>
<svg class="r" style="left:5px;top:511px;" width="17" height="17" viewBox="0 0 17 17"><path d="M1,5 L5,1 L9,5 L5,9 Z" fill="#fff" stroke="#3a3a5a" stroke-width="1.1"/><path d="M3,6 L7,6 L5,8 Z" fill="#e86a10"/><rect x="6" y="8" width="8" height="7" fill="#fff" stroke="#4a4a6a" stroke-width="1.1"/><rect x="8" y="10" width="4" height="3" fill="#e86a10"/></svg>
<svg class="r" style="left:5px;top:546px;" width="17" height="17" viewBox="0 0 17 17"><circle cx="8" cy="8" r="7" fill="none" stroke="#c4c4c4" stroke-width="1.2"/><path d="M8,2 V14 M2,8 H14" stroke="#c4c4c4" stroke-width="1.2"/></svg>
<div class="r" style="left:3px;top:144px;width:18px;height:1px;background:#dadada;"></div>
<div class="r" style="left:3px;top:197px;width:18px;height:1px;background:#dadada;"></div>
<div class="r" style="left:3px;top:320px;width:18px;height:1px;background:#dadada;"></div>
<div class="r" style="left:3px;top:350px;width:18px;height:1px;background:#dadada;"></div>
<div class="r" style="left:3px;top:404px;width:18px;height:1px;background:#dadada;"></div>
<div class="r" style="left:3px;top:457px;width:18px;height:1px;background:#dadada;"></div>
<div class="r" style="left:3px;top:533px;width:18px;height:1px;background:#dadada;"></div>
<div class="r" style="left:25px;top:94px;width:1250px;height:16px;background:#ebebeb;"></div>
<div class="r" style="left:25px;top:94px;width:88px;height:16px;background:#d9d9d9;"></div>
<div class="r" style="left:113px;top:94px;width:90px;height:16px;background:#cce4f8;"></div>
<div class="r" style="left:203px;top:94px;width:16px;height:16px;background:#e2e2e2;"></div>
<svg class="r" style="left:205px;top:96px;" width="12" height="12" viewBox="0 0 12 12"><path d="M6,1 V11 M1,6 H11" stroke="#b4b4b4" stroke-width="1.4"/></svg>
<div class="t" style="left:28px;top:97.11px;font-size:10.5px;line-height:10.5px;color:#000;font-weight:normal;font-style:normal;transform:scaleX(0.9430);">Безымянный-1</div>
<div class="t" style="left:117px;top:97.11px;font-size:10.5px;line-height:10.5px;color:#000;font-weight:normal;font-style:normal;transform:scaleX(0.9569);">Безымянный-2</div>
<div class="r" style="left:25px;top:110px;width:1248px;height:1.3px;background:#1aa2f2;"></div>
<div class="r" style="left:25px;top:111.3px;width:1248px;height:1px;background:#fbf8f2;"></div>
<div class="r" style="left:25px;top:111.5px;width:1250px;height:15px;background:#f3f3f3;"></div>
<div class="r" style="left:25px;top:111px;width:15px;height:696px;background:#f3f3f3;"></div>
<svg class="r" style="left:29px;top:115px;" width="10" height="10" viewBox="0 0 10 10"><path d="M1,4 L4,1 M2,1 L4,1 L4,3 M6,6 L9,9 M9,7 L9,9 L7,9 M1,8 L2,9 M8,1 L9,2" stroke="#000" stroke-width="1.1" fill="none"/></svg>
<svg class="r" style="left:41px;top:111px;" width="1218" height="16" viewBox="0 0 1218 16"><rect x="3.0" y="13.5" width="1" height="1.2" fill="#a0a0a0"/><rect x="10.9" y="12.5" width="1" height="2" fill="#a8a8a8"/><rect x="18.8" y="13.5" width="1" height="1.2" fill="#a0a0a0"/><rect x="26.7" y="13.5" width="1" height="1.2" fill="#a0a0a0"/><rect x="34.5" y="13.5" width="1" height="1.2" fill="#a0a0a0"/><rect x="42.4" y="13.5" width="1" height="1.2" fill="#a0a0a0"/><rect x="50.3" y="10.5" width="1" height="4" fill="#808080"/><rect x="58.2" y="13.5" width="1" height="1.2" fill="#a0a0a0"/><rect x="66.0" y="13.5" width="1" height="1.2" fill="#a0a0a0"/><rect x="73.9" y="13.5" width="1" height="1.2" fill="#a0a0a0"/><rect x="81.8" y="13.5" width="1" height="1.2" fill="#a0a0a0"/><rect x="89.7" y="12.5" width="1" height="2" fill="#a8a8a8"/><rect x="97.6" y="13.5" width="1" height="1.2" fill="#a0a0a0"/><rect x="105.4" y="13.5" width="1" height="1.2" fill="#a0a0a0"/><rect x="113.3" y="13.5" width="1" height="1.2" fill="#a0a0a0"/><rect x="121.2" y="13.5" width="1" height="1.2" fill="#a0a0a0"/><rect x="129.1" y="10.5" width="1" height="4" fill="#808080"/><rect x="136.9" y="13.5" width="1" height="1.2" fill="#a0a0a0"/><rect x="144.8" y="13.5" width="1" height="1.2" fill="#a0a0a0"/><rect x="152.7" y="13.5" width="1" height="1.2" fill="#a0a0a0"/><rect x="160.6" y="13.5" width="1" height="1.2" fill="#a0a0a0"/><rect x="168.4" y="12.5" width="1" height="2" fill="#a8a8a8"/><rect x="176.3" y="13.5" width="1" height="1.2" fill="#a0a0a0"/><rect x="184.2" y="13.5" width="1" height="1.2" fill="#a0a0a0"/><rect x="192.1" y="13.5" width="1" height="1.2" fill="#a0a0a0"/><rect x="199.9" y="13.5" width="1" height="1.2" fill="#a0a0a0"/><rect x="207.8" y="10.5" width="1" height="4" fill="#808080"/><rect x="215.7" y="13.5" width="1" height="1.2" fill="#a0a0a0"/><rect x="223.6" y="13.5" width="1" height="1.2" fill="#a0a0a0"/><rect x="231.4" y="13.5" width="1" height="1.2" fill="#a0a0a0"/><rect x="239.3" y="13.5" width="1" height="1.2" fill="#a0a0a0"/><rect x="247.2" y="12.5" width="1" height="2" fill="#a8a8a8"/><rect x="255.1" y="13.5" width="1" height="1.2" fill="#a0a0a0"/><rect x="262.9" y="13.5" width="1" height="1.2" fill="#a0a0a0"/><rect x="270.8" y="13.5" width="1" height="1.2" fill="#a0a0a0"/><rect x="278.7" y="13.5" width="1" height="1.2" fill="#a0a0a0"/><rect x="286.6" y="10.5" width="1" height="4" fill="#808080"/><rect x="294.4" y="13.5" width="1" height="1.2" fill="#a0a0a0"/><rect x="302.3" y="13.5" width="1" height="1.2" fill="#a0a0a0"/><rect x="310.2" y="13.5" width="1" height="1.2" fill="#a0a0a0"/><rect x="318.1" y="13.5" width="1" height="1.2" fill="#a0a0a0"/><rect x="325.9" y="12.5" width="1" height="2" fill="#a8a8a8"/><rect x="333.8" y="13.5" width="1" height="1.2" fill="#a0a0a0"/><rect x="341.7" y="13.5" width="1" height="1.2" fill="#a0a0a0"/><rect x="349.6" y="13.5" width="1" height="1.2" fill="#a0a0a0"/><rect x="357.4" y="13.5" width="1" height="1.2" fill="#a0a0a0"/><rect x="365.3" y="10.5" width="1" height="4" fill="#808080"/><rect x="373.2" y="13.5" width="1" height="1.2" fill="#a0a0a0"/><rect x="381.1" y="13.5" width="1" height="1.2" fill="#a0a0a0"/><rect x="388.9" y="13.5" width="1" height="1.2" fill="#a0a0a0"/><rect x="396.8" y="13.5" width="1" height="1.2" fill="#a0a0a0"/><rect x="404.7" y="12.5" width="1" height="2" fill="#a8a8a8"/><rect x="412.6" y="13.5" width="1" height="1.2" fill="#a0a0a0"/><rect x="420.4" y="13.5" width="1" height="1.2" fill="#a0a0a0"/><rect x="428.3" y="13.5" width="1" height="1.2" fill="#a0a0a0"/><rect x="436.2" y="13.5" width="1" height="1.2" fill="#a0a0a0"/><rect x="444.1" y="10.5" width="1" height="4" fill="#808080"/><rect x="451.9" y="13.5" width="1" height="1.2" fill="#a0a0a0"/><rect x="459.8" y="13.5" width="1" height="1.2" fill="#a0a0a0"/><rect x="467.7" y="13.5" width="1" height="1.2" fill="#a0a0a0"/><rect x="475.5" y="13.5" width="1" height="1.2" fill="#a0a0a0"/><rect x="483.4" y="12.5" width="1" height="2" fill="#a8a8a8"/><rect x="491.3" y="13.5" width="1" height="1.2" fill="#a0a0a0"/><rect x="499.2" y="13.5" width="1" height="1.2" fill="#a0a0a0"/><rect x="507.0" y="13.5" width="1" height="1.2" fill="#a0a0a0"/><rect x="514.9" y="13.5" width="1" height="1.2" fill="#a0a0a0"/><rect x="522.8" y="10.5" width="1" height="4" fill="#808080"/><rect x="530.7" y="13.5" width="1" height="1.2" fill="#a0a0a0"/><rect x="538.5" y="13.5" width="1" height="1.2" fill="#a0a0a0"/><rect x="546.4" y="13.5" width="1" height="1.2" fill="#a0a0a0"/><rect x="554.3" y="13.5" width="1" height="1.2" fill="#a0a0a0"/><rect x="562.2" y="12.5" width="1" height="2" fill="#a8a8a8"/><rect x="570.0" y="13.5" width="1" height="1.2" fill="#a0a0a0"/><rect x="577.9" y="13.5" width="1" height="1.2" fill="#a0a0a0"/><rect x="585.8" y="13.5" width="1" height="1.2" fill="#a0a0a0"/><rect x="593.7" y="13.5" width="1" height="1.2" fill="#a0a0a0"/><rect x="601.5" y="10.5" width="1" height="4" fill="#808080"/><rect x="609.4" y="13.5" width="1" height="1.2" fill="#a0a0a0"/><rect x="617.3" y="13.5" width="1" height="1.2" fill="#a0a0a0"/><rect x="625.2" y="13.5" width="1" height="1.2" fill="#a0a0a0"/><rect x="633.0" y="13.5" width="1" height="1.2" fill="#a0a0a0"/><rect x="640.9" y="12.5" width="1" height="2" fill="#a8a8a8"/><rect x="648.8" y="13.5" width="1" height="1.2" fill="#a0a0a0"/><rect x="656.7" y="13.5" width="1" height="1.2" fill="#a0a0a0"/><rect x="664.5" y="13.5" width="1" height="1.2" fill="#a0a0a0"/><rect x="672.4" y="13.5" width="1" height="1.2" fill="#a0a0a0"/><rect x="680.3" y="10.5" width="1" height="4" fill="#808080"/><rect x="688.2" y="13.5" width="1" height="1.2" fill="#a0a0a0"/><rect x="696.0" y="13.5" width="1" height="1.2" fill="#a0a0a0"/><rect x="703.9" y="13.5" width="1" height="1.2" fill="#a0a0a0"/><rect x="711.8" y="13.5" width="1" height="1.2" fill="#a0a0a0"/><rect x="719.7" y="12.5" width="1" height="2" fill="#a8a8a8"/><rect x="727.5" y="13.5" width="1" height="1.2" fill="#a0a0a0"/><rect x="735.4" y="13.5" width="1" height="1.2" fill="#a0a0a0"/><rect x="743.3" y="13.5" width="1" height="1.2" fill="#a0a0a0"/><rect x="751.2" y="13.5" width="1" height="1.2" fill="#a0a0a0"/><rect x="759.0" y="10.5" width="1" height="4" fill="#808080"/><rect x="766.9" y="13.5" width="1" height="1.2" fill="#a0a0a0"/><rect x="774.8" y="13.5" width="1" height="1.2" fill="#a0a0a0"/><rect x="782.7" y="13.5" width="1" height="1.2" fill="#a0a0a0"/><rect x="790.5" y="13.5" width="1" height="1.2" fill="#a0a0a0"/><rect x="798.4" y="12.5" width="1" height="2" fill="#a8a8a8"/><rect x="806.3" y="13.5" width="1" height="1.2" fill="#a0a0a0"/><rect x="814.2" y="13.5" width="1" height="1.2" fill="#a0a0a0"/><rect x="822.0" y="13.5" width="1" height="1.2" fill="#a0a0a0"/><rect x="829.9" y="13.5" width="1" height="1.2" fill="#a0a0a0"/><rect x="837.8" y="10.5" width="1" height="4" fill="#808080"/><rect x="845.7" y="13.5" width="1" height="1.2" fill="#a0a0a0"/><rect x="853.5" y="13.5" width="1" height="1.2" fill="#a0a0a0"/><rect x="861.4" y="13.5" width="1" height="1.2" fill="#a0a0a0"/><rect x="869.3" y="13.5" width="1" height="1.2" fill="#a0a0a0"/><rect x="877.2" y="12.5" width="1" height="2" fill="#a8a8a8"/><rect x="885.0" y="13.5" width="1" height="1.2" fill="#a0a0a0"/><rect x="892.9" y="13.5" width="1" height="1.2" fill="#a0a0a0"/><rect x="900.8" y="13.5" width="1" height="1.2" fill="#a0a0a0"/><rect x="908.7" y="13.5" width="1" height="1.2" fill="#a0a0a0"/><rect x="916.5" y="10.5" width="1" height="4" fill="#808080"/><rect x="924.4" y="13.5" width="1" height="1.2" fill="#a0a0a0"/><rect x="932.3" y="13.5" width="1" height="1.2" fill="#a0a0a0"/><rect x="940.2" y="13.5" width="1" height="1.2" fill="#a0a0a0"/><rect x="948.0" y="13.5" width="1" height="1.2" fill="#a0a0a0"/><rect x="955.9" y="12.5" width="1" height="2" fill="#a8a8a8"/><rect x="963.8" y="13.5" width="1" height="1.2" fill="#a0a0a0"/><rect x="971.7" y="13.5" width="1" height="1.2" fill="#a0a0a0"/><rect x="979.5" y="13.5" width="1" height="1.2" fill="#a0a0a0"/><rect x="987.4" y="13.5" width="1" height="1.2" fill="#a0a0a0"/><rect x="995.3" y="10.5" width="1" height="4" fill="#808080"/><rect x="1003.2" y="13.5" width="1" height="1.2" fill="#a0a0a0"/><rect x="1011.0" y="13.5" width="1" height="1.2" fill="#a0a0a0"/><rect x="1018.9" y="13.5" width="1" height="1.2" fill="#a0a0a0"/><rect x="1026.8" y="13.5" width="1" height="1.2" fill="#a0a0a0"/><rect x="1034.7" y="12.5" width="1" height="2" fill="#a8a8a8"/><rect x="1042.5" y="13.5" width="1" height="1.2" fill="#a0a0a0"/><rect x="1050.4" y="13.5" width="1" height="1.2" fill="#a0a0a0"/><rect x="1058.3" y="13.5" width="1" height="1.2" fill="#a0a0a0"/><rect x="1066.2" y="13.5" width="1" height="1.2" fill="#a0a0a0"/><rect x="1074.0" y="10.5" width="1" height="4" fill="#808080"/><rect x="1081.9" y="13.5" width="1" height="1.2" fill="#a0a0a0"/><rect x="1089.8" y="13.5" width="1" height="1.2" fill="#a0a0a0"/><rect x="1097.7" y="13.5" width="1" height="1.2" fill="#a0a0a0"/><rect x="1105.5" y="13.5" width="1" height="1.2" fill="#a0a0a0"/><rect x="1113.4" y="12.5" width="1" height="2" fill="#a8a8a8"/><rect x="1121.3" y="13.5" width="1" height="1.2" fill="#a0a0a0"/><rect x="1129.2" y="13.5" width="1" height="1.2" fill="#a0a0a0"/><rect x="1137.0" y="13.5" width="1" height="1.2" fill="#a0a0a0"/><rect x="1144.9" y="13.5" width="1" height="1.2" fill="#a0a0a0"/><rect x="1152.8" y="10.5" width="1" height="4" fill="#808080"/><rect x="1160.7" y="13.5" width="1" height="1.2" fill="#a0a0a0"/><rect x="1168.5" y="13.5" width="1" height="1.2" fill="#a0a0a0"/><rect x="1176.4" y="13.5" width="1" height="1.2" fill="#a0a0a0"/><rect x="1184.3" y="13.5" width="1" height="1.2" fill="#a0a0a0"/><rect x="1192.2" y="12.5" width="1" height="2" fill="#a8a8a8"/><rect x="1200.0" y="13.5" width="1" height="1.2" fill="#a0a0a0"/><rect x="1207.9" y="13.5" width="1" height="1.2" fill="#a0a0a0"/><rect x="1215.8" y="13.5" width="1" height="1.2" fill="#a0a0a0"/></svg>
<div class="t" style="left:85.0px;top:113.03px;font-size:8px;line-height:8px;color:#9c9c9c;font-weight:normal;font-style:normal;transform:scaleX(0.9441);">135</div>
<div class="t" style="left:163.75px;top:113.03px;font-size:8px;line-height:8px;color:#9c9c9c;font-weight:normal;font-style:normal;transform:scaleX(0.9441);">140</div>
<div class="t" style="left:242.5px;top:113.03px;font-size:8px;line-height:8px;color:#9c9c9c;font-weight:normal;font-style:normal;transform:scaleX(0.9441);">145</div>
<div class="t" style="left:321.25px;top:113.03px;font-size:8px;line-height:8px;color:#9c9c9c;font-weight:normal;font-style:normal;transform:scaleX(0.9441);">150</div>
<div class="t" style="left:400.0px;top:113.03px;font-size:8px;line-height:8px;color:#9c9c9c;font-weight:normal;font-style:normal;transform:scaleX(0.9441);">155</div>
<div class="t" style="left:478.75px;top:113.03px;font-size:8px;line-height:8px;color:#9c9c9c;font-weight:normal;font-style:normal;transform:scaleX(0.9441);">160</div>
<div class="t" style="left:557.5px;top:113.03px;font-size:8px;line-height:8px;color:#9c9c9c;font-weight:normal;font-style:normal;transform:scaleX(0.9441);">165</div>
<div class="t" style="left:636.25px;top:113.03px;font-size:8px;line-height:8px;color:#9c9c9c;font-weight:normal;font-style:normal;transform:scaleX(0.9441);">170</div>
<div class="t" style="left:715.0px;top:113.03px;font-size:8px;line-height:8px;color:#9c9c9c;font-weight:normal;font-style:normal;transform:scaleX(0.9441);">175</div>
<div class="t" style="left:793.75px;top:113.03px;font-size:8px;line-height:8px;color:#9c9c9c;font-weight:normal;font-style:normal;transform:scaleX(0.9441);">180</div>
<div class="t" style="left:872.5px;top:113.03px;font-size:8px;line-height:8px;color:#9c9c9c;font-weight:normal;font-style:normal;transform:scaleX(0.9441);">185</div>
<div class="t" style="left:951.25px;top:113.03px;font-size:8px;line-height:8px;color:#9c9c9c;font-weight:normal;font-style:normal;transform:scaleX(0.9441);">190</div>
<div class="t" style="left:1030.0px;top:113.03px;font-size:8px;line-height:8px;color:#9c9c9c;font-weight:normal;font-style:normal;transform:scaleX(0.9441);">195</div>
<div class="t" style="left:1108.75px;top:113.03px;font-size:8px;line-height:8px;color:#9c9c9c;font-weight:normal;font-style:normal;transform:scaleX(0.9441);">200</div>
<div class="t" style="left:1187.5px;top:113.03px;font-size:8px;line-height:8px;color:#9c9c9c;font-weight:normal;font-style:normal;transform:scaleX(0.9441);">205</div>
<div class="t" style="left:1221px;top:113.03px;font-size:8px;line-height:8px;color:#9c9c9c;font-weight:normal;font-style:normal;transform:scaleX(1.0144);">миллиметры</div>
<div class="r" style="left:1258px;top:124px;width:1px;height:3px;background:#9a9a9a;"></div>
<div class="r" style="left:40px;top:126px;width:1233px;height:1px;background:#9c9c9c;"></div>
<div class="r" style="left:1271px;top:120px;width:1px;height:6px;background:#9c9c9c;"></div>
<svg class="r" style="left:25px;top:127px;" width="15" height="680" viewBox="0 0 15 680"><rect x="13.5" y="0.8" width="1.2" height="1" fill="#a0a0a0"/><rect x="13.5" y="8.6" width="1.2" height="1" fill="#a0a0a0"/><rect x="10" y="16.5" width="5" height="1" fill="#707070"/><rect x="13.5" y="24.4" width="1.2" height="1" fill="#a0a0a0"/><rect x="13.5" y="32.2" width="1.2" height="1" fill="#a0a0a0"/><rect x="13.5" y="40.1" width="1.2" height="1" fill="#a0a0a0"/><rect x="13.5" y="48.0" width="1.2" height="1" fill="#a0a0a0"/><rect x="12" y="55.9" width="3" height="1" fill="#9a9a9a"/><rect x="13.5" y="63.8" width="1.2" height="1" fill="#a0a0a0"/><rect x="13.5" y="71.6" width="1.2" height="1" fill="#a0a0a0"/><rect x="13.5" y="79.5" width="1.2" height="1" fill="#a0a0a0"/><rect x="13.5" y="87.4" width="1.2" height="1" fill="#a0a0a0"/><rect x="10" y="95.2" width="5" height="1" fill="#707070"/><rect x="13.5" y="103.1" width="1.2" height="1" fill="#a0a0a0"/><rect x="13.5" y="111.0" width="1.2" height="1" fill="#a0a0a0"/><rect x="13.5" y="118.9" width="1.2" height="1" fill="#a0a0a0"/><rect x="13.5" y="126.8" width="1.2" height="1" fill="#a0a0a0"/><rect x="12" y="134.6" width="3" height="1" fill="#9a9a9a"/><rect x="13.5" y="142.5" width="1.2" height="1" fill="#a0a0a0"/><rect x="13.5" y="150.4" width="1.2" height="1" fill="#a0a0a0"/><rect x="13.5" y="158.2" width="1.2" height="1" fill="#a0a0a0"/><rect x="13.5" y="166.1" width="1.2" height="1" fill="#a0a0a0"/><rect x="10" y="174.0" width="5" height="1" fill="#707070"/><rect x="13.5" y="181.9" width="1.2" height="1" fill="#a0a0a0"/><rect x="13.5" y="189.8" width="1.2" height="1" fill="#a0a0a0"/><rect x="13.5" y="197.6" width="1.2" height="1" fill="#a0a0a0"/><rect x="13.5" y="205.5" width="1.2" height="1" fill="#a0a0a0"/><rect x="12" y="213.4" width="3" height="1" fill="#9a9a9a"/><rect x="13.5" y="221.2" width="1.2" height="1" fill="#a0a0a0"/><rect x="13.5" y="229.1" width="1.2" height="1" fill="#a0a0a0"/><rect x="13.5" y="237.0" width="1.2" height="1" fill="#a0a0a0"/><rect x="13.5" y="244.9" width="1.2" height="1" fill="#a0a0a0"/><rect x="10" y="252.8" width="5" height="1" fill="#707070"/><rect x="13.5" y="260.6" width="1.2" height="1" fill="#a0a0a0"/><rect x="13.5" y="268.5" width="1.2" height="1" fill="#a0a0a0"/><rect x="13.5" y="276.4" width="1.2" height="1" fill="#a0a0a0"/><rect x="13.5" y="284.2" width="1.2" height="1" fill="#a0a0a0"/><rect x="12" y="292.1" width="3" height="1" fill="#9a9a9a"/><rect x="13.5" y="300.0" width="1.2" height="1" fill="#a0a0a0"/><rect x="13.5" y="307.9" width="1.2" height="1" fill="#a0a0a0"/><rect x="13.5" y="315.8" width="1.2" height="1" fill="#a0a0a0"/><rect x="13.5" y="323.6" width="1.2" height="1" fill="#a0a0a0"/><rect x="10" y="331.5" width="5" height="1" fill="#707070"/><rect x="13.5" y="339.4" width="1.2" height="1" fill="#a0a0a0"/><rect x="13.5" y="347.2" width="1.2" height="1" fill="#a0a0a0"/><rect x="13.5" y="355.1" width="1.2" height="1" fill="#a0a0a0"/><rect x="13.5" y="363.0" width="1.2" height="1" fill="#a0a0a0"/><rect x="12" y="370.9" width="3" height="1" fill="#9a9a9a"/><rect x="13.5" y="378.8" width="1.2" height="1" fill="#a0a0a0"/><rect x="13.5" y="386.6" width="1.2" height="1" fill="#a0a0a0"/><rect x="13.5" y="394.5" width="1.2" height="1" fill="#a0a0a0"/><rect x="13.5" y="402.4" width="1.2" height="1" fill="#a0a0a0"/><rect x="10" y="410.2" width="5" height="1" fill="#707070"/><rect x="13.5" y="418.1" width="1.2" height="1" fill="#a0a0a0"/><rect x="13.5" y="426.0" width="1.2" height="1" fill="#a0a0a0"/><rect x="13.5" y="433.9" width="1.2" height="1" fill="#a0a0a0"/><rect x="13.5" y="441.8" width="1.2" height="1" fill="#a0a0a0"/><rect x="12" y="449.6" width="3" height="1" fill="#9a9a9a"/><rect x="13.5" y="457.5" width="1.2" height="1" fill="#a0a0a0"/><rect x="13.5" y="465.4" width="1.2" height="1" fill="#a0a0a0"/><rect x="13.5" y="473.2" width="1.2" height="1" fill="#a0a0a0"/><rect x="13.5" y="481.1" width="1.2" height="1" fill="#a0a0a0"/><rect x="10" y="489.0" width="5" height="1" fill="#707070"/><rect x="13.5" y="496.9" width="1.2" height="1" fill="#a0a0a0"/><rect x="13.5" y="504.8" width="1.2" height="1" fill="#a0a0a0"/><rect x="13.5" y="512.6" width="1.2" height="1" fill="#a0a0a0"/><rect x="13.5" y="520.5" width="1.2" height="1" fill="#a0a0a0"/><rect x="12" y="528.4" width="3" height="1" fill="#9a9a9a"/><rect x="13.5" y="536.2" width="1.2" height="1" fill="#a0a0a0"/><rect x="13.5" y="544.1" width="1.2" height="1" fill="#a0a0a0"/><rect x="13.5" y="552.0" width="1.2" height="1" fill="#a0a0a0"/><rect x="13.5" y="559.9" width="1.2" height="1" fill="#a0a0a0"/><rect x="10" y="567.8" width="5" height="1" fill="#707070"/><rect x="13.5" y="575.6" width="1.2" height="1" fill="#a0a0a0"/><rect x="13.5" y="583.5" width="1.2" height="1" fill="#a0a0a0"/><rect x="13.5" y="591.4" width="1.2" height="1" fill="#a0a0a0"/><rect x="13.5" y="599.2" width="1.2" height="1" fill="#a0a0a0"/><rect x="12" y="607.1" width="3" height="1" fill="#9a9a9a"/><rect x="13.5" y="615.0" width="1.2" height="1" fill="#a0a0a0"/><rect x="13.5" y="622.9" width="1.2" height="1" fill="#a0a0a0"/><rect x="13.5" y="630.8" width="1.2" height="1" fill="#a0a0a0"/><rect x="13.5" y="638.6" width="1.2" height="1" fill="#a0a0a0"/><rect x="10" y="646.5" width="5" height="1" fill="#707070"/><rect x="13.5" y="654.4" width="1.2" height="1" fill="#a0a0a0"/><rect x="13.5" y="662.2" width="1.2" height="1" fill="#a0a0a0"/><rect x="13.5" y="670.1" width="1.2" height="1" fill="#a0a0a0"/><rect x="13.5" y="678.0" width="1.2" height="1" fill="#a0a0a0"/></svg>
<div class="t" style="left:27.1px;top:149.8px;font-size:8px;line-height:8px;color:#9c9c9c;transform:rotate(-90deg) scaleX(0.944);transform-origin:0 0">195</div>
<div class="t" style="left:27.1px;top:228.6px;font-size:8px;line-height:8px;color:#9c9c9c;transform:rotate(-90deg) scaleX(0.944);transform-origin:0 0">190</div>
<div class="t" style="left:27.1px;top:307.3px;font-size:8px;line-height:8px;color:#9c9c9c;transform:rotate(-90deg) scaleX(0.944);transform-origin:0 0">185</div>
<div class="t" style="left:27.1px;top:386.1px;font-size:8px;line-height:8px;color:#9c9c9c;transform:rotate(-90deg) scaleX(0.944);transform-origin:0 0">180</div>
<div class="t" style="left:27.1px;top:464.8px;font-size:8px;line-height:8px;color:#9c9c9c;transform:rotate(-90deg) scaleX(0.944);transform-origin:0 0">175</div>
<div class="t" style="left:27.1px;top:543.5px;font-size:8px;line-height:8px;color:#9c9c9c;transform:rotate(-90deg) scaleX(0.944);transform-origin:0 0">170</div>
<div class="t" style="left:27.1px;top:622.3px;font-size:8px;line-height:8px;color:#9c9c9c;transform:rotate(-90deg) scaleX(0.944);transform-origin:0 0">165</div>
<div class="t" style="left:27.1px;top:701.0px;font-size:8px;line-height:8px;color:#9c9c9c;transform:rotate(-90deg) scaleX(0.944);transform-origin:0 0">160</div>
<div class="t" style="left:27.1px;top:818px;font-size:8px;line-height:8px;color:#9c9c9c;transform:rotate(-90deg) scaleX(0.993);transform-origin:0 0">миллиметры</div>
<div class="r" style="left:39px;top:127px;width:1px;height:680px;background:#9c9c9c;"></div>
<div class="r" style="left:308px;top:113px;width:1px;height:12px;background:#fff;"></div>
<svg class="r" style="left:307px;top:112px;" width="3" height="14" viewBox="0 0 3 14"><path d="M1.5,0 V14" stroke="#000" stroke-width="1.2" stroke-dasharray="2,1.5"/></svg>
<svg class="r" style="left:25px;top:491px;" width="14" height="3" viewBox="0 0 14 3"><path d="M0,1.5 H14" stroke="#000" stroke-width="1.2" stroke-dasharray="2,1.5"/></svg>
<svg class="r" style="left:41px;top:127px" width="1217" height="680" viewBox="41 127 1217 680"><rect x="40" y="126" width="1219" height="681" fill="#c3dfe4"/><path d="M453,120 C468,155 486,190 494,230 L1265,430 L1265,120 Z" fill="#afc8ce"/><polygon points="30.0,205.0 35.0,205.0 40.0,205.1 45.0,205.2 50.0,205.3 55.0,205.3 60.0,205.4 65.0,205.5 70.0,205.6 75.0,205.6 80.0,205.7 85.0,205.8 90.0,205.9 95.0,205.9 100.0,206.0 105.0,206.1 110.0,206.2 115.0,206.3 120.0,206.3 125.0,206.4 130.0,206.5 135.0,206.6 140.0,206.7 145.0,206.8 150.0,206.9 155.0,207.0 160.0,207.0 165.0,207.1 170.0,207.2 175.0,207.3 180.0,207.4 185.0,207.5 190.0,207.6 195.0,207.7 200.0,207.9 205.0,208.0 210.0,208.1 215.0,208.2 220.0,208.3 225.0,208.4 230.0,208.6 235.0,208.7 240.0,208.8 245.0,208.9 250.0,209.1 255.0,209.2 260.0,209.3 265.0,209.5 270.0,209.6 275.0,209.8 280.0,209.9 285.0,210.1 290.0,210.2 295.0,210.4 300.0,210.5 305.0,210.7 310.0,210.9 315.0,211.1 320.0,211.2 325.0,211.4 330.0,211.6 335.0,211.8 340.0,212.0 345.0,212.2 350.0,212.4 355.0,212.6 360.0,212.8 365.0,213.0 370.0,213.2 375.0,213.4 380.0,213.7 385.0,213.9 390.0,214.1 395.0,214.4 400.0,214.6 405.0,214.9 410.0,215.1 415.0,215.4 420.0,215.6 425.0,215.9 430.0,216.2 435.0,216.5 440.0,216.8 445.0,217.0 450.0,217.3 455.0,217.6 460.0,217.9 465.0,218.3 470.0,218.6 475.0,218.9 480.0,219.2 485.0,219.6 490.0,219.9 495.0,220.2 500.0,220.6 505.0,221.0 510.0,221.3 515.0,221.7 520.0,222.1 525.0,222.5 530.0,222.8 535.0,223.2 540.0,223.6 545.0,224.1 550.0,224.5 555.0,224.9 560.0,225.3 565.0,225.8 570.0,226.2 575.0,226.7 580.0,227.1 585.0,227.6 590.0,228.0 595.0,228.5 600.0,229.0 605.0,229.5 610.0,230.0 615.0,230.5 620.0,231.0 625.0,231.6 630.0,232.1 635.0,232.6 640.0,233.2 645.0,233.7 650.0,234.3 655.0,234.9 660.0,235.5 665.0,236.0 670.0,236.6 675.0,237.2 680.0,237.9 685.0,238.5 690.0,239.1 695.0,239.7 700.0,240.4 705.0,241.1 710.0,241.7 715.0,242.4 720.0,243.1 725.0,243.8 730.0,244.5 735.0,245.2 740.0,245.9 745.0,246.6 750.0,247.4 755.0,248.1 760.0,248.9 765.0,249.6 770.0,250.4 775.0,251.2 780.0,252.0 785.0,252.8 790.0,253.6 795.0,254.4 800.0,255.3 805.0,256.1 810.0,257.0 815.0,257.8 820.0,258.7 825.0,259.6 830.0,260.5 835.0,261.4 840.0,262.4 845.0,263.3 850.0,264.3 855.0,265.2 860.0,266.2 865.0,267.2 870.0,268.2 875.0,269.2 880.0,270.3 885.0,271.3 890.0,272.4 895.0,273.5 900.0,274.6 905.0,275.7 910.0,276.8 915.0,277.9 920.0,279.1 925.0,280.3 930.0,281.4 935.0,282.7 940.0,283.9 945.0,285.1 950.0,286.4 955.0,287.6 960.0,288.9 965.0,290.3 970.0,291.6 975.0,292.9 980.0,294.3 985.0,295.7 990.0,297.1 995.0,298.5 1000.0,300.0 1005.0,301.4 1010.0,302.9 1015.0,304.4 1020.0,305.9 1025.0,307.5 1030.0,309.0 1035.0,310.6 1040.0,312.2 1045.0,313.9 1050.0,315.5 1055.0,317.2 1060.0,318.9 1065.0,320.6 1070.0,322.4 1075.0,324.1 1080.0,325.9 1085.0,327.7 1090.0,329.6 1095.0,331.4 1100.0,333.3 1105.0,335.2 1110.0,337.2 1115.0,339.1 1120.0,341.1 1125.0,343.1 1130.0,345.2 1135.0,347.2 1140.0,349.3 1145.0,351.4 1150.0,353.6 1155.0,355.8 1160.0,358.0 1165.0,360.2 1170.0,362.5 1175.0,364.8 1180.0,367.1 1185.0,369.5 1190.0,371.9 1195.0,374.3 1200.0,376.8 1205.0,379.3 1210.0,381.8 1215.0,384.4 1220.0,387.0 1225.0,389.7 1230.0,392.4 1235.0,395.1 1240.0,397.9 1245.0,400.7 1250.0,403.6 1255.0,406.5 1260.0,409.5 1265.0,412.5 1270.0,415.5 1270,820 30,820" fill="#cc9e7e"/><path d="M30,413 L40,411 Q165,385 221,308 L258,348 L655,701 L691,812 L30,812 Z" fill="#e0af8a"/><path d="M878.0,280.0 L879.1,285.0 L880.3,290.0 L881.3,295.0 L882.4,300.0 L883.5,305.0 L884.5,310.0 L885.4,315.0 L886.4,320.0 L887.3,325.0 L888.2,330.0 L889.0,335.0 L889.8,340.0 L890.5,345.0 L891.2,350.0 L891.9,355.0 L892.5,360.0 L893.1,365.0 L893.6,370.0 L894.1,375.0 L894.5,380.0 L894.9,385.0 L895.2,390.0 L895.5,395.0 L895.7,400.0 L895.8,405.0 L895.9,410.0 L896.0,415.0 L896.0,420.0 L895.9,425.0 L895.8,430.0 L895.7,435.0 L895.5,440.0 L895.2,445.0 L894.8,450.0 L894.5,455.0 L894.0,460.0 L893.5,465.0 L893.0,470.0 L892.4,475.0 L891.7,480.0 L891.0,485.0 L890.2,490.0 L889.4,495.0 L888.5,500.0 L887.6,505.0 L886.6,510.0 L885.6,515.0 L884.5,520.0 L883.4,525.0 L882.2,530.0 L881.0,535.0 L879.7,540.0 L878.4,545.0 L877.1,550.0 L875.7,555.0 L874.3,560.0 L872.8,565.0 L871.3,570.0 L869.8,575.0 L868.2,580.0 L866.6,585.0 L865.0,590.0 L863.3,595.0 L861.6,600.0 L859.9,605.0 L858.2,610.0 L856.4,615.0 L854.6,620.0 L852.8,625.0 L851.0,630.0 L849.2,635.0 L847.4,640.0 L845.6,645.0 L843.8,650.0 L841.9,655.0 L840.1,660.0 L838.3,665.0 L836.5,670.0 L834.6,675.0 L832.9,680.0 L831.1,685.0 L829.3,690.0 L827.6,695.0 L825.9,700.0 L824.2,705.0 L822.5,710.0 L820.9,715.0 L819.4,720.0 L817.8,725.0 L816.3,730.0 L814.9,735.0 L813.5,740.0 L812.2,745.0 L810.9,750.0 L809.7,755.0 L808.6,760.0 L807.5,765.0 L806.6,770.0 L805.7,775.0 L804.8,780.0 L804.1,785.0 L803.5,790.0 L803.0,795.0 L802.5,800.0 L802.2,805.0 L802.0,810.0 L801.9,815.0 L801.9,820.0 L802.1,825.0 L802.4,830.0 L802.8,835.0 L803.4,840.0 L1270,840 L1270.0,418.5 L1265.0,415.5 L1260.0,412.5 L1255.0,409.5 L1250.0,406.6 L1245.0,403.7 L1240.0,400.9 L1235.0,398.1 L1230.0,395.4 L1225.0,392.7 L1220.0,390.0 L1215.0,387.4 L1210.0,384.8 L1205.0,382.3 L1200.0,379.8 L1195.0,377.3 L1190.0,374.9 L1185.0,372.5 L1180.0,370.1 L1175.0,367.8 L1170.0,365.5 L1165.0,363.2 L1160.0,361.0 L1155.0,358.8 L1150.0,356.6 L1145.0,354.4 L1140.0,352.3 L1135.0,350.2 L1130.0,348.2 L1125.0,346.1 L1120.0,344.1 L1115.0,342.1 L1110.0,340.2 L1105.0,338.2 L1100.0,336.3 L1095.0,334.4 L1090.0,332.6 L1085.0,330.7 L1080.0,328.9 L1075.0,327.1 L1070.0,325.4 L1065.0,323.6 L1060.0,321.9 L1055.0,320.2 L1050.0,318.5 L1045.0,316.9 L1040.0,315.2 L1035.0,313.6 L1030.0,312.0 L1025.0,310.5 L1020.0,308.9 L1015.0,307.4 L1010.0,305.9 L1005.0,304.4 L1000.0,303.0 L995.0,301.5 L990.0,300.1 L985.0,298.7 L980.0,297.3 L975.0,295.9 L970.0,294.6 L965.0,293.3 L960.0,291.9 L955.0,290.6 L950.0,289.4 L945.0,288.1 L940.0,286.9 L935.0,285.7 L930.0,284.4 L925.0,283.3 L920.0,282.1 L915.0,280.9 L910.0,279.8 L905.0,278.7 L900.0,277.6 L895.0,276.5 L890.0,275.4 L885.0,274.3 L880.0,273.3 L875.0,272.2 L870.0,271.2 L865.0,270.2 L860.0,269.2 Z" fill="#63543a"/><path d="M878.0,280.0 L879.1,285.0 L880.3,290.0 L881.3,295.0 L882.4,300.0 L883.5,305.0 L884.5,310.0 L885.4,315.0 L886.4,320.0 L887.3,325.0 L888.2,330.0 L889.0,335.0 L889.8,340.0 L890.5,345.0 L891.2,350.0 L891.9,355.0 L892.5,360.0 L893.1,365.0 L893.6,370.0 L894.1,375.0 L894.5,380.0 L894.9,385.0 L895.2,390.0 L895.5,395.0 L895.7,400.0 L895.8,405.0 L895.9,410.0 L896.0,415.0 L896.0,420.0 L895.9,425.0 L895.8,430.0 L895.7,435.0 L895.5,440.0 L895.2,445.0 L894.8,450.0 L894.5,455.0 L894.0,460.0 L893.5,465.0 L893.0,470.0 L892.4,475.0 L891.7,480.0 L891.0,485.0 L890.2,490.0 L889.4,495.0 L888.5,500.0 L887.6,505.0 L886.6,510.0 L885.6,515.0 L884.5,520.0 L883.4,525.0 L882.2,530.0 L881.0,535.0 L879.7,540.0 L878.4,545.0 L877.1,550.0 L875.7,555.0 L874.3,560.0 L872.8,565.0 L871.3,570.0 L869.8,575.0 L868.2,580.0 L866.6,585.0 L865.0,590.0 L863.3,595.0 L861.6,600.0 L859.9,605.0 L858.2,610.0 L856.4,615.0 L854.6,620.0 L852.8,625.0 L851.0,630.0 L849.2,635.0 L847.4,640.0 L845.6,645.0 L843.8,650.0 L841.9,655.0 L840.1,660.0 L838.3,665.0 L836.5,670.0 L834.6,675.0 L832.9,680.0 L831.1,685.0 L829.3,690.0 L827.6,695.0 L825.9,700.0 L824.2,705.0 L822.5,710.0 L820.9,715.0 L819.4,720.0 L817.8,725.0 L816.3,730.0 L814.9,735.0 L813.5,740.0 L812.2,745.0 L810.9,750.0 L809.7,755.0 L808.6,760.0 L807.5,765.0 L806.6,770.0 L805.7,775.0 L804.8,780.0 L804.1,785.0 L803.5,790.0 L803.0,795.0 L802.5,800.0 L802.2,805.0 L802.0,810.0 L801.9,815.0 L801.9,820.0 L802.1,825.0 L802.4,830.0 L802.8,835.0 L803.4,840.0" fill="none" stroke="#000" stroke-width="23.5"/><polyline points="485.0,218.7 490.0,219.0 495.0,219.3 500.0,219.7 505.0,220.1 510.0,220.4 515.0,220.8 520.0,221.2 525.0,221.6 530.0,221.9 535.0,222.3 540.0,222.7 545.0,223.2 550.0,223.6 555.0,224.0 560.0,224.4 565.0,224.9 570.0,225.3 575.0,225.8 580.0,226.2 585.0,226.7 590.0,227.1 595.0,227.6 600.0,228.1 605.0,228.6 610.0,229.1 615.0,229.6 620.0,230.1 625.0,230.7 630.0,231.2 635.0,231.7 640.0,232.3 645.0,232.8 650.0,233.4 655.0,234.0 660.0,234.6 665.0,235.1 670.0,235.7 675.0,236.3 680.0,237.0 685.0,237.6 690.0,238.2 695.0,238.8 700.0,239.5 705.0,240.2 710.0,240.8 715.0,241.5 720.0,242.2 725.0,242.9 730.0,243.6 735.0,244.3 740.0,245.0 745.0,245.7 750.0,246.5 755.0,247.2 760.0,248.0 765.0,248.7 770.0,249.5 775.0,250.3 780.0,251.1 785.0,251.9 790.0,252.7 795.0,253.5 800.0,254.4 805.0,255.2 810.0,256.1 815.0,256.9 820.0,257.8 825.0,258.7 830.0,259.6 835.0,260.5 840.0,261.5 845.0,262.4 850.0,263.4 855.0,264.3 860.0,265.3 865.0,266.3 870.0,267.3 875.0,268.3 880.0,269.4 885.0,270.4 890.0,271.5 895.0,272.6 900.0,273.7 905.0,274.8 910.0,275.9 915.0,277.0 920.0,278.2 925.0,279.4 930.0,280.5 935.0,281.8 940.0,283.0 945.0,284.2 950.0,285.5 955.0,286.7 960.0,288.0 965.0,289.4 970.0,290.7 975.0,292.0 980.0,293.4 985.0,294.8 990.0,296.2 995.0,297.6 1000.0,299.1 1005.0,300.5 1010.0,302.0 1015.0,303.5 1020.0,305.0 1025.0,306.6 1030.0,308.1 1035.0,309.7 1040.0,311.3 1045.0,313.0 1050.0,314.6 1055.0,316.3 1060.0,318.0 1065.0,319.7 1070.0,321.5 1075.0,323.2 1080.0,325.0 1085.0,326.8 1090.0,328.7 1095.0,330.5 1100.0,332.4 1105.0,334.3 1110.0,336.3 1115.0,338.2 1120.0,340.2 1125.0,342.2 1130.0,344.3 1135.0,346.3 1140.0,348.4 1145.0,350.5 1150.0,352.7 1155.0,354.9 1160.0,357.1 1165.0,359.3 1170.0,361.6 1175.0,363.9 1180.0,366.2 1185.0,368.6 1190.0,371.0 1195.0,373.4 1200.0,375.9 1205.0,378.4 1210.0,380.9 1215.0,383.5 1220.0,386.1 1225.0,388.8 1230.0,391.5 1235.0,394.2 1240.0,397.0 1245.0,399.8 1250.0,402.7 1255.0,405.6 1260.0,408.6 1265.0,411.6 1270.0,414.6" fill="none" stroke="#c4e3ea" stroke-width="1.3"/><polygon points="30.0,205.0 35.0,205.0 40.0,205.1 45.0,205.2 50.0,205.3 55.0,205.3 60.0,205.4 65.0,205.5 70.0,205.6 75.0,205.6 80.0,205.7 85.0,205.8 90.0,205.9 95.0,205.9 100.0,206.0 105.0,206.1 110.0,206.2 115.0,206.3 120.0,206.3 125.0,206.4 130.0,206.5 135.0,206.6 140.0,206.7 145.0,206.8 150.0,206.9 155.0,207.0 160.0,207.0 165.0,207.1 170.0,207.2 175.0,207.3 180.0,207.4 185.0,207.5 190.0,207.6 195.0,207.7 200.0,207.9 205.0,208.0 210.0,208.1 215.0,208.2 220.0,208.3 225.0,208.4 230.0,208.6 235.0,208.7 240.0,208.8 245.0,208.9 250.0,209.1 255.0,209.2 260.0,209.3 265.0,209.5 270.0,209.6 275.0,209.8 280.0,209.9 285.0,210.1 290.0,210.2 295.0,210.4 300.0,210.5 305.0,210.7 310.0,210.9 315.0,211.1 320.0,211.2 325.0,211.4 330.0,211.6 335.0,211.8 340.0,212.0 345.0,212.2 350.0,212.4 355.0,212.6 360.0,212.8 365.0,213.0 370.0,213.2 375.0,213.4 380.0,213.7 385.0,213.9 390.0,214.1 395.0,214.4 400.0,214.6 405.0,214.9 410.0,215.1 415.0,215.4 420.0,215.6 425.0,215.9 430.0,216.2 435.0,216.5 440.0,216.8 445.0,217.0 450.0,217.3 455.0,217.6 460.0,217.9 465.0,218.3 470.0,218.6 475.0,218.9 480.0,219.2 485.0,219.6 490.0,219.9 495.0,220.2 500.0,220.6 505.0,221.0 510.0,221.3 515.0,221.7 520.0,222.1 525.0,222.5 530.0,222.8 535.0,223.2 540.0,223.6 545.0,224.1 550.0,224.5 555.0,224.9 560.0,225.3 565.0,225.8 570.0,226.2 575.0,226.7 580.0,227.1 585.0,227.6 590.0,228.0 595.0,228.5 600.0,229.0 605.0,229.5 610.0,230.0 615.0,230.5 620.0,231.0 625.0,231.6 630.0,232.1 635.0,232.6 640.0,233.2 645.0,233.7 650.0,234.3 655.0,234.9 660.0,235.5 665.0,236.0 670.0,236.6 675.0,237.2 680.0,237.9 685.0,238.5 690.0,239.1 695.0,239.7 700.0,240.4 705.0,241.1 710.0,241.7 715.0,242.4 720.0,243.1 725.0,243.8 730.0,244.5 735.0,245.2 740.0,245.9 745.0,246.6 750.0,247.4 755.0,248.1 760.0,248.9 765.0,249.6 770.0,250.4 775.0,251.2 780.0,252.0 785.0,252.8 790.0,253.6 795.0,254.4 800.0,255.3 805.0,256.1 810.0,257.0 815.0,257.8 820.0,258.7 825.0,259.6 830.0,260.5 835.0,261.4 840.0,262.4 845.0,263.3 850.0,264.3 855.0,265.2 860.0,266.2 865.0,267.2 870.0,268.2 875.0,269.2 880.0,270.3 885.0,271.3 890.0,272.4 895.0,273.5 900.0,274.6 905.0,275.7 910.0,276.8 915.0,277.9 920.0,279.1 925.0,280.3 930.0,281.4 935.0,282.7 940.0,283.9 945.0,285.1 950.0,286.4 955.0,287.6 960.0,288.9 965.0,290.3 970.0,291.6 975.0,292.9 980.0,294.3 985.0,295.7 990.0,297.1 995.0,298.5 1000.0,300.0 1005.0,301.4 1010.0,302.9 1015.0,304.4 1020.0,305.9 1025.0,307.5 1030.0,309.0 1035.0,310.6 1040.0,312.2 1045.0,313.9 1050.0,315.5 1055.0,317.2 1060.0,318.9 1065.0,320.6 1070.0,322.4 1075.0,324.1 1080.0,325.9 1085.0,327.7 1090.0,329.6 1095.0,331.4 1100.0,333.3 1105.0,335.2 1110.0,337.2 1115.0,339.1 1120.0,341.1 1125.0,343.1 1130.0,345.2 1135.0,347.2 1140.0,349.3 1145.0,351.4 1150.0,353.6 1155.0,355.8 1160.0,358.0 1165.0,360.2 1170.0,362.5 1175.0,364.8 1180.0,367.1 1185.0,369.5 1190.0,371.9 1195.0,374.3 1200.0,376.8 1205.0,379.3 1210.0,381.8 1215.0,384.4 1220.0,387.0 1225.0,389.7 1230.0,392.4 1235.0,395.1 1240.0,397.9 1245.0,400.7 1250.0,403.6 1255.0,406.5 1260.0,409.5 1265.0,412.5 1270.0,415.5 1270.0,443.4 1265.0,440.2 1260.0,437.0 1255.0,433.9 1250.0,430.9 1245.0,427.8 1240.0,424.9 1235.0,421.9 1230.0,419.0 1225.0,416.2 1220.0,413.4 1215.0,410.6 1210.0,407.9 1205.0,405.2 1200.0,402.6 1195.0,400.0 1190.0,397.4 1185.0,394.9 1180.0,392.4 1175.0,390.0 1170.0,387.6 1165.0,385.2 1160.0,382.9 1155.0,380.6 1150.0,378.3 1145.0,376.1 1140.0,373.9 1135.0,371.7 1130.0,369.6 1125.0,367.5 1120.0,365.4 1115.0,363.4 1110.0,361.4 1105.0,359.4 1100.0,357.5 1095.0,355.6 1090.0,353.7 1085.0,351.8 1080.0,350.0 1075.0,348.2 1070.0,346.4 1065.0,344.6 1060.0,342.9 1055.0,341.2 1050.0,339.5 1045.0,337.8 1040.0,336.2 1035.0,334.6 1030.0,333.0 1025.0,331.4 1020.0,329.8 1015.0,328.3 1010.0,326.8 1005.0,325.3 1000.0,323.8 995.0,322.3 990.0,320.9 985.0,319.4 980.0,318.0 975.0,316.6 970.0,315.3 965.0,313.9 960.0,312.6 955.0,311.2 950.0,309.9 945.0,308.6 940.0,307.3 935.0,306.1 930.0,304.8 925.0,303.6 920.0,302.4 915.0,301.2 910.0,300.0 905.0,298.9 900.0,297.7 895.0,296.6 890.0,295.4 885.0,294.3 880.0,293.2 875.0,292.2 870.0,291.1 865.0,290.1 860.0,289.0 855.0,288.0 850.0,287.0 845.0,286.0 840.0,285.0 835.0,284.0 830.0,283.1 825.0,282.1 820.0,281.2 815.0,280.3 810.0,279.4 805.0,278.5 800.0,277.6 795.0,276.8 790.0,275.9 785.0,275.1 780.0,274.2 775.0,273.4 770.0,272.6 765.0,271.8 760.0,271.0 755.0,270.3 750.0,269.5 745.0,268.7 740.0,268.0 735.0,267.3 730.0,266.5 725.0,265.8 720.0,265.1 715.0,264.4 710.0,263.8 705.0,263.1 700.0,262.4 695.0,261.8 690.0,261.1 685.0,260.5 680.0,259.9 675.0,259.2 670.0,258.6 665.0,258.0 660.0,257.4 655.0,256.9 650.0,256.3 645.0,255.7 640.0,255.2 635.0,254.6 630.0,254.1 625.0,253.5 620.0,253.0 615.0,252.5 610.0,252.0 605.0,251.5 600.0,251.0 595.0,250.5 590.0,250.0 585.0,249.6 580.0,249.1 575.0,248.6 570.0,248.2 565.0,247.7 560.0,247.3 555.0,246.9 550.0,246.5 545.0,246.0 540.0,245.6 535.0,245.2 530.0,244.8 525.0,244.5 520.0,244.1 515.0,243.7 510.0,243.3 505.0,243.0 500.0,242.6 495.0,242.3 490.0,241.9 485.0,241.6 480.0,241.3 475.0,240.9 470.0,240.6 465.0,240.3 460.0,240.0 455.0,239.7 450.0,239.4 445.0,239.1 440.0,238.8 435.0,238.6 430.0,238.3 425.0,238.0 420.0,237.8 415.0,237.5 410.0,237.3 405.0,237.0 400.0,236.8 395.0,236.5 390.0,236.3 385.0,236.1 380.0,235.9 375.0,235.6 370.0,235.4 365.0,235.2 360.0,235.0 355.0,234.8 350.0,234.6 345.0,234.4 340.0,234.2 335.0,234.1 330.0,233.9 325.0,233.7 320.0,233.5 315.0,233.4 310.0,233.2 305.0,233.0 300.0,232.9 295.0,232.7 290.0,232.6 285.0,232.4 280.0,232.3 275.0,232.2 270.0,232.0 265.0,231.9 260.0,231.8 255.0,231.6 250.0,231.5 245.0,231.4 240.0,231.3 235.0,231.1 230.0,231.0 225.0,230.9 220.0,230.8 215.0,230.7 210.0,230.6 205.0,230.5 200.0,230.4 195.0,230.3 190.0,230.2 185.0,230.1 180.0,230.0 175.0,229.9 170.0,229.8 165.0,229.7 160.0,229.7 155.0,229.6 150.0,229.5 145.0,229.4 140.0,229.3 135.0,229.3 130.0,229.2 125.0,229.1 120.0,229.0 115.0,229.0 110.0,228.9 105.0,228.8 100.0,228.7 95.0,228.7 90.0,228.6 85.0,228.5 80.0,228.5 75.0,228.4 70.0,228.3 65.0,228.3 60.0,228.2 55.0,228.1 50.0,228.1 45.0,228.0 40.0,227.9 35.0,227.9 30.0,227.8" fill="#000"/><polygon points="1040.0,118.1 1044.0,119.4 1048.0,120.8 1052.0,122.1 1056.0,123.5 1060.0,124.9 1064.0,126.4 1068.0,127.8 1072.0,129.2 1076.0,130.7 1080.0,132.2 1084.0,133.7 1088.0,135.2 1092.0,136.7 1096.0,138.3 1100.0,139.8 1104.0,141.4 1108.0,143.0 1112.0,144.6 1116.0,146.2 1120.0,147.9 1124.0,149.5 1128.0,151.2 1132.0,152.9 1136.0,154.6 1140.0,156.3 1144.0,158.0 1148.0,159.8 1152.0,161.6 1156.0,163.3 1160.0,165.1 1164.0,166.9 1168.0,168.8 1172.0,170.6 1176.0,172.5 1180.0,174.3 1184.0,176.2 1188.0,178.1 1192.0,180.1 1196.0,182.0 1200.0,183.9 1204.0,185.9 1208.0,187.9 1212.0,189.9 1216.0,191.9 1220.0,193.9 1224.0,196.0 1228.0,198.0 1232.0,200.1 1236.0,202.2 1240.0,204.3 1244.0,206.4 1248.0,208.6 1252.0,210.7 1256.0,212.9 1260.0,215.1 1264.0,217.3 1268.0,219.5 1270.0,246.4 1266.0,244.3 1262.0,242.1 1258.0,240.0 1254.0,237.9 1250.0,235.8 1246.0,233.7 1242.0,231.6 1238.0,229.5 1234.0,227.5 1230.0,225.4 1226.0,223.4 1222.0,221.3 1218.0,219.3 1214.0,217.3 1210.0,215.3 1206.0,213.3 1202.0,211.4 1198.0,209.4 1194.0,207.5 1190.0,205.5 1186.0,203.6 1182.0,201.7 1178.0,199.8 1174.0,197.9 1170.0,196.1 1166.0,194.2 1162.0,192.4 1158.0,190.5 1154.0,188.7 1150.0,186.9 1146.0,185.1 1142.0,183.3 1138.0,181.5 1134.0,179.7 1130.0,178.0 1126.0,176.2 1122.0,174.5 1118.0,172.8 1114.0,171.1 1110.0,169.4 1106.0,167.7 1102.0,166.0 1098.0,164.4 1094.0,162.7 1090.0,161.1 1086.0,159.5 1082.0,157.8 1078.0,156.2 1074.0,154.6 1070.0,153.1 1066.0,151.5 1062.0,149.9 1058.0,148.4 1054.0,146.9 1050.0,145.4 1046.0,143.8 1042.0,142.4 1038.0,140.9 1034.0,139.4 1030.0,137.9 1026.0,136.5 1022.0,135.1 1018.0,133.6 1014.0,132.2 1010.0,130.8 1006.0,129.4 1002.0,128.0 998.0,126.7 994.0,125.3 990.0,124.0 986.0,122.7 982.0,121.3 978.0,120.0 974.0,118.7 970.0,117.4" fill="#000"/><path d="M265.0,350.0 L268.6,351.3 L273.2,352.9 L280.4,355.4 L286.2,357.4 L292.5,359.6 L299.1,361.9 L305.7,364.2 L312.5,366.5 L319.3,368.9 L326.0,371.2 L332.6,373.4 L339.1,375.6 L345.4,377.8 L351.6,379.8 L357.6,381.8 L363.5,383.8 L369.4,385.7 L375.2,387.6 L381.1,389.5 L386.9,391.4 L392.7,393.3 L398.5,395.2 L404.3,397.2 L410.1,399.1 L416.0,401.0 L421.9,402.9 L427.8,404.9 L433.7,406.9 L439.6,408.8 L445.5,410.7 L451.3,412.7 L457.1,414.6 L462.9,416.4 L468.5,418.3 L474.1,420.1 L479.5,421.8 L484.9,423.5 L490.2,425.2 L495.4,426.8 L500.5,428.4 L505.5,429.9 L510.5,431.4 L515.4,432.9 L520.4,434.4 L525.3,435.8 L530.2,437.2 L535.2,438.6 L540.2,439.9 L545.2,441.2 L550.2,442.5 L555.3,443.8 L560.3,445.0 L565.4,446.2 L570.4,447.4 L575.5,448.5 L580.4,449.7 L585.3,450.8 L590.2,451.8 L594.9,452.9 L599.6,453.9 L604.2,454.8 L608.7,455.8 L613.1,456.7 L617.4,457.6 L621.7,458.5 L625.9,459.3 L630.1,460.1 L634.3,460.9 L638.5,461.7 L642.7,462.5 L646.9,463.2 L651.2,464.0 L655.5,464.7 L659.8,465.4 L664.1,466.1 L668.5,466.8 L672.8,467.5 L677.1,468.1 L681.4,468.8 L685.6,469.5 L689.7,470.1 L693.8,470.7 L697.7,471.3 L701.6,472.0 L705.3,472.6 L708.9,473.1 L712.4,473.7 L715.9,474.3 L719.2,474.9 L722.4,475.5 L725.6,476.0 L728.6,476.6 L731.5,477.2 L734.2,477.8 L736.9,478.4 L739.4,479.0 L741.7,479.6 L743.9,480.2 L746.0,480.7 L748.0,481.4 L749.8,482.0 L751.6,482.7 L753.3,483.4 L755.0,484.2 L756.6,485.1 L758.3,486.2 L760.0,487.3 L761.7,488.6 L763.4,489.9 L765.2,491.5 L767.0,493.1 L768.8,494.8 L770.6,496.7 L772.4,498.6 L774.1,500.7 L775.8,502.9 L777.5,505.1 L779.2,507.5 L780.8,510.0 L782.3,512.6 L783.8,515.3 L785.3,518.2 L786.7,521.2 L788.1,524.2 L789.4,527.4 L790.6,530.5 L791.8,533.7 L792.9,536.8 L793.9,539.9 L794.8,542.8 L795.6,545.6 L796.3,548.3 L796.9,550.8 L797.4,553.1 L797.8,555.4 L798.1,557.5 L798.3,559.5 L798.4,561.4 L798.5,563.2 L798.4,565.0 L798.4,566.8 L798.3,568.5 L798.1,570.2 L797.9,571.9 L797.7,573.6 L797.4,575.2 L797.1,576.8 L796.7,578.4 L796.3,579.9 L795.8,581.5 L795.3,583.1 L794.6,584.6 L793.9,586.2 L793.1,587.8 L792.2,589.4 L791.2,591.0 L790.1,592.7 L788.9,594.4 L787.6,596.0 L786.2,597.8 L784.7,599.5 L783.1,601.3 L781.3,603.2 L779.3,605.3 L777.1,607.4 L774.7,609.8 L772.1,612.3 L769.2,615.0 L766.1,617.9 L762.7,621.1 L759.1,624.4 L755.2,627.9 L751.2,631.5 L746.9,635.2 L742.5,638.9 L738.0,642.6 L733.3,646.2 L728.5,649.7 L723.5,653.1 L718.4,656.3 L713.2,659.4 L707.8,662.4 L702.3,665.2 L696.7,668.0 L691.0,670.6 L685.3,673.1 L679.5,675.4 L673.8,677.7 L668.1,679.8 L662.5,681.8 L657.1,683.7 L651.8,685.4 L646.7,686.9 L641.7,688.4 L636.8,689.6 L632.0,690.8 L627.4,691.8 L622.7,692.8 L618.0,693.6 L613.3,694.4 L608.5,695.1 L603.5,695.7 L598.5,696.3 L593.2,696.9 L587.8,697.4 L582.2,697.9 L576.5,698.3 L570.7,698.7 L564.8,699.0 L558.7,699.3 L552.7,699.6 L546.5,699.7 L540.4,699.8 L534.3,699.9 L528.1,699.8 L522.0,699.7 L515.9,699.6 L509.7,699.4 L503.6,699.1 L497.5,698.7 L491.4,698.3 L485.3,697.9 L479.3,697.3 L473.3,696.8 L467.5,696.1 L461.7,695.4 L456.1,694.6 L450.6,693.8 L445.3,692.9 L440.1,691.9 L435.0,690.9 L430.0,689.8 L425.1,688.6 L420.3,687.4 L415.5,686.1 L410.8,684.8 L406.0,683.4 L401.3,681.9 L396.5,680.3 L391.7,678.6 L386.9,676.9 L382.0,675.0 L377.1,673.1 L372.2,671.1 L367.3,669.1 L362.5,667.0 L357.7,664.9 L353.0,662.7 L348.5,660.5 L344.1,658.4 L339.9,656.2 L335.9,654.1 L332.0,652.0 L328.4,649.9 L324.9,647.8 L321.6,645.8 L318.4,643.7 L315.3,641.6 L312.3,639.6 L309.4,637.5 L306.5,635.4 L303.6,633.2 L300.8,631.1 L297.9,628.9 L295.1,626.7 L292.2,624.5 L289.4,622.2 L286.6,619.9 L283.8,617.6 L281.1,615.3 L278.5,612.9 L275.9,610.6 L273.4,608.2 L271.0,605.8 L268.7,603.4 L266.5,600.9 L264.4,598.5 L262.4,596.0 L260.5,593.5 L258.7,591.0 L257.0,588.4 L255.4,585.8 L253.9,583.2 L252.4,580.6 L251.0,578.0 L249.7,575.3 L248.4,572.6 L247.2,569.8 L246.1,567.1 L245.0,564.2 L243.9,561.4 L243.0,558.5 L242.0,555.6 L241.2,552.7 L240.4,549.8 L239.6,546.8 L238.9,543.9 L238.3,540.9 L237.8,537.9 L237.2,535.0 L236.8,532.0 L236.4,529.1 L236.1,526.1 L235.8,523.2 L235.6,520.2 L235.4,517.3 L235.3,514.3 L235.2,511.4 L235.1,508.6 L235.1,505.7 L235.1,502.9 L235.1,500.2 L235.1,497.5 L235.2,494.8 L235.3,492.2 L235.4,489.6 L235.6,487.0 L235.8,484.5 L235.9,482.0 L236.1,479.6 L236.3,477.2 L236.5,474.9 L236.8,472.6 L237.0,470.4 L237.2,468.2 L237.4,466.2 L237.5,464.2 L237.7,462.2 L238.0,460.2 L238.2,458.3 L238.4,456.2 L238.7,454.1 L239.0,451.9 L239.4,449.4 L239.8,446.8 L240.2,444.0 L240.7,440.9 L241.2,437.6 L241.8,434.1 L242.5,430.5 L243.1,426.7 L243.8,422.8 L244.6,418.9 L245.4,414.9 L246.2,410.9 L247.1,406.9 L248.0,403.0 L249.0,399.1 L250.0,395.1 L251.0,391.2 L252.1,387.4 L253.3,383.5 L254.5,379.8 L255.6,376.1 L256.8,372.6 L257.9,369.2 L258.9,366.1 L259.9,363.3 L260.7,360.7 L261.5,358.5 L262.2,356.6 L262.7,355.0 L263.2,353.8 L263.6,352.8 L263.9,352.0 L264.1,351.5 L264.3,351.1 L264.5,350.8 L264.7,350.5 L264.8,350.4 L264.9,350.2 L265.0,350.0 Z" fill="#fff" stroke="#000" stroke-width="23" stroke-linejoin="miter" stroke-miterlimit="10"/><path d="M233,285 L268,352" stroke="#000" stroke-width="21"/><circle cx="522" cy="542" r="51" fill="#000"/><ellipse cx="1055" cy="831" rx="85" ry="40" fill="#000"/></svg>
<div class="r" style="left:1259px;top:127px;width:14px;height:680px;background:#fff;"></div>
<div class="r" style="left:1260px;top:127px;width:12px;height:14px;background:#f0f0f0;"></div>
<svg class="r" style="left:1260px;top:127px;" width="12" height="14" viewBox="0 0 12 14"><path d="M2.5,9 L6,5.5 L9.5,9" fill="none" stroke="#333" stroke-width="1.6"/></svg>
<div class="r" style="left:1260px;top:415px;width:11px;height:47px;background:#cccccc;"></div>
<div class="r" style="left:1260px;top:793px;width:12px;height:14px;background:#f0f0f0;"></div>
<svg class="r" style="left:1260px;top:793px;" width="12" height="14" viewBox="0 0 12 14"><path d="M2.5,5 L6,8.5 L9.5,5" fill="none" stroke="#333" stroke-width="1.6"/></svg>
<div class="r" style="left:1273px;top:94px;width:3px;height:744px;background:#fafafa;"></div>
<div class="r" style="left:1274.5px;top:94px;width:1px;height:744px;background:#d4d4d4;"></div>
<div class="r" style="left:41px;top:807px;width:1232px;height:15px;background:#f3f3f3;"></div>
<div class="r" style="left:39px;top:807px;width:1px;height:15px;background:#9c9c9c;"></div>
<svg class="r" style="left:40px;top:808px;" width="13" height="13" viewBox="0 0 13 13"><path d="M2,1 H8 L11,4 V12 H2 Z" fill="#fff" stroke="#2a2a3a" stroke-width="1.1"/><path d="M6.5,5 V10 M4,7.5 H9" stroke="#2a2a3a" stroke-width="1.2"/></svg>
<svg class="r" style="left:55px;top:808px;" width="13" height="13" viewBox="0 0 13 13"><path d="M3,2 V11" stroke="#9a9aa8" stroke-width="1.3"/><path d="M10,2 L5,6.5 L10,11 Z" fill="#9a9aa8"/></svg>
<svg class="r" style="left:70px;top:808px;" width="13" height="13" viewBox="0 0 13 13"><path d="M9,2 L4,6.5 L9,11 Z" fill="#9a9aa8"/></svg>
<div class="t" style="left:97px;top:810.11px;font-size:10.5px;line-height:10.5px;color:#000;font-weight:normal;font-style:normal;transform:scaleX(0.8868);">1 из 1</div>
<svg class="r" style="left:135px;top:808px;" width="13" height="13" viewBox="0 0 13 13"><path d="M4,2 L9,6.5 L4,11 Z" fill="#9a9aa8"/></svg>
<svg class="r" style="left:149px;top:808px;" width="13" height="13" viewBox="0 0 13 13"><path d="M10,2 V11" stroke="#9a9aa8" stroke-width="1.3"/><path d="M3,2 L8,6.5 L3,11 Z" fill="#9a9aa8"/></svg>
<svg class="r" style="left:163px;top:808px;" width="13" height="13" viewBox="0 0 13 13"><path d="M2,1 H8 L11,4 V12 H2 Z" fill="#fff" stroke="#2a2a3a" stroke-width="1.1"/><path d="M6.5,5 V10 M4,7.5 H9" stroke="#2a2a3a" stroke-width="1.2"/></svg>
<div class="r" style="left:177px;top:808px;width:1px;height:14px;background:#c8c8c8;"></div>
<svg class="r" style="left:178px;top:806px;" width="80" height="16" viewBox="0 0 80 16"><path d="M0,0 H70 L79,9 V16 H0 Z" fill="#fff"/><path d="M70,0 L79,9 V16" fill="none" stroke="#b8b8b8"/></svg>
<div class="t" style="left:190px;top:809.11px;font-size:10.5px;line-height:10.5px;color:#000;font-weight:normal;font-style:normal;transform:scaleX(0.9052);">Страница 1</div>
<svg class="r" style="left:651px;top:808px;" width="4" height="13" viewBox="0 0 4 13"><path d="M2,2 V12" stroke="#8a8a8a" stroke-dasharray="1,2"/></svg>
<div class="r" style="left:656px;top:807px;width:1px;height:15px;background:#b4b4b4;"></div>
<div class="r" style="left:657px;top:807px;width:600px;height:15px;background:#fff;"></div>
<div class="r" style="left:657px;top:807px;width:14px;height:14px;background:#f0f0f0;"></div>
<svg class="r" style="left:657px;top:807px;" width="14" height="14" viewBox="0 0 14 14"><path d="M8.5,3.5 L5,7 L8.5,10.5" fill="none" stroke="#333" stroke-width="1.6"/></svg>
<div class="r" style="left:973px;top:808px;width:94px;height:12px;background:#cccccc;"></div>
<div class="r" style="left:1244px;top:807px;width:14px;height:14px;background:#f0f0f0;"></div>
<svg class="r" style="left:1244px;top:807px;" width="14" height="14" viewBox="0 0 14 14"><path d="M5.5,3.5 L9,7 L5.5,10.5" fill="none" stroke="#333" stroke-width="1.6"/></svg>
<svg class="r" style="left:1259px;top:807px;" width="14" height="14" viewBox="0 0 14 14"><circle cx="6" cy="6" r="4.3" fill="#fff" stroke="#4a4a6a" stroke-width="1.1"/><circle cx="6" cy="6" r="1.5" fill="none" stroke="#4a4a6a" stroke-width="0.8"/><path d="M9,9 L12.5,12.5" stroke="#1a1a2a" stroke-width="1.8"/></svg>
<div class="r" style="left:25px;top:822px;width:1250px;height:1px;background:#d8d8d8;"></div>
<div class="r" style="left:25px;top:823px;width:1250px;height:14px;background:#f3f3f3;"></div>
<svg class="r" style="left:27px;top:823px;" width="5" height="14" viewBox="0 0 5 14"><path d="M2.5,2 V12" stroke="#9a9a9a" stroke-dasharray="1,1.5"/></svg>
<svg class="r" style="left:33px;top:825px;" width="8" height="10" viewBox="0 0 8 10"><path d="M1,1 L7,5 L1,9 Z" fill="#000"/></svg>
<svg class="r" style="left:43px;top:823px;" width="13" height="14" viewBox="0 0 13 14"><path d="M2,12 L9,5" stroke="#2a2a3a" stroke-width="1.8"/><circle cx="10" cy="4" r="2.5" fill="#1a1a2a"/><path d="M2,12 L1,13" stroke="#2a6ab8" stroke-width="1.5"/></svg>
<svg class="r" style="left:58px;top:824px;" width="8" height="12" viewBox="0 0 8 12"><path d="M6,2 L2,6 L6,10" fill="none" stroke="#b8b8c8" stroke-width="1.1"/></svg>
<div class="r" style="left:70px;top:823px;width:15px;height:14px;background:#fff;box-sizing:border-box;border:1px solid #5a5a5a"></div>
<svg class="r" style="left:70px;top:823px;" width="15" height="14" viewBox="0 0 15 14"><path d="M1,1 L14,13 M14,1 L1,13" stroke="#000" stroke-width="0.9"/></svg>
<div class="t" style="left:469px;top:824.61px;font-size:10.5px;line-height:10.5px;color:#a8a8a8;font-weight:normal;font-style:italic;transform:scaleX(0.9236);">Перетащите сюда цвета (или объекты), чтобы сохранить их вместе с документом</div>
<svg class="r" style="left:1240px;top:824px;" width="10" height="12" viewBox="0 0 10 12"><path d="M2,1 L7,6 L2,11" fill="none" stroke="#c0c0d0" stroke-width="1.1"/></svg>
<svg class="r" style="left:1254px;top:824px;" width="12" height="12" viewBox="0 0 12 12"><path d="M2,2 L5.5,6 L2,10 M6.5,2 L10,6 L6.5,10" fill="none" stroke="#b8b8cc" stroke-width="1.1"/></svg>
<div class="r" style="left:0px;top:837px;width:1600px;height:1px;background:#dcdcdc;"></div>
<div class="r" style="left:0px;top:838px;width:1600px;height:28px;background:#f3f3f3;"></div>
<div class="t" style="left:5px;top:847.11px;font-size:10.5px;line-height:10.5px;color:#000;font-weight:normal;font-style:normal;transform:scaleX(0.8460);">( 148,806; 172,795 )</div>
<div class="r" style="left:93px;top:845px;width:13px;height:13px;background:#fff;box-sizing:border-box;border:1px solid #3a3a3a"></div>
<svg class="r" style="left:93px;top:845px;" width="13" height="13" viewBox="0 0 13 13"><path d="M4.5,3 L9,6.5 L4.5,10 Z" fill="#000"/></svg>
<div class="t" style="left:131px;top:847.11px;font-size:10.5px;line-height:10.5px;color:#000;font-weight:normal;font-style:normal;transform:scaleX(0.9086);">Растр (RGB) вкл. Слой 1 180 x 180 точек на дюйм</div>
<svg class="r" style="left:1221px;top:845px;" width="14" height="14" viewBox="0 0 14 14"><rect x="1" y="1" width="12" height="10" fill="#fff" stroke="#6a6a90" stroke-width="1.1"/><rect x="2.5" y="2.5" width="9" height="7" fill="none" stroke="#e05050" stroke-width="0.8"/><rect x="2.5" y="6" width="9" height="3.5" fill="#6ab06a" opacity="0.6"/><circle cx="7" cy="6" r="2" fill="#fff" stroke="#2a2a3a"/><path d="M4,13 H10" stroke="#8a8aa8" stroke-width="1.2"/></svg>
<svg class="r" style="left:1244px;top:845px;" width="16" height="15" viewBox="0 0 16 15"><path d="M1.5,7 L7,2 L12.5,7.5 L7,13 Z" fill="#fff" stroke="#3a3a5a" stroke-width="1.1"/><path d="M3,9 H11 L7,13 Z" fill="#f08a10"/><path d="M12,8 Q15,9 14,13" fill="none" stroke="#f08a10" stroke-width="1.3"/></svg>
<div class="r" style="left:1263px;top:845px;width:15px;height:15px;background:#fff;box-sizing:border-box;border:1px solid #4a4a4a"></div>
<svg class="r" style="left:1263px;top:845px;" width="15" height="15" viewBox="0 0 15 15"><path d="M1,1 L14,14 M14,1 L1,14" stroke="#000" stroke-width="0.9"/></svg>
<div class="t" style="left:1281px;top:847.11px;font-size:10.5px;line-height:10.5px;color:#000;font-weight:normal;font-style:normal;transform:scaleX(0.9506);">Нет</div>
<div class="r" style="left:1416px;top:844px;width:1px;height:18px;background:#d8d8d8;"></div>
<svg class="r" style="left:1421px;top:844px;" width="12" height="16" viewBox="0 0 12 16"><path d="M6,1 L10,8 L8,13 H4 L2,8 Z" fill="#fff" stroke="#3a3a5a" stroke-width="1.1"/><path d="M6,6 V10" stroke="#3a3a5a"/><path d="M3,14.5 H9" stroke="#3a3a5a" stroke-width="1.2"/></svg>
<div class="r" style="left:1437px;top:845px;width:15px;height:15px;background:#fff;box-sizing:border-box;border:1px solid #4a4a4a"></div>
<svg class="r" style="left:1437px;top:845px;" width="15" height="15" viewBox="0 0 15 15"><path d="M1,1 L14,14 M14,1 L1,14" stroke="#000" stroke-width="0.9"/></svg>
<div class="t" style="left:1455px;top:847.11px;font-size:10.5px;line-height:10.5px;color:#000;font-weight:normal;font-style:normal;transform:scaleX(0.9506);">Нет</div>
<div class="r" style="left:1276px;top:94px;width:276px;height:744px;background:#f3f3f3;"></div>
<div class="r" style="left:1276px;top:94px;width:292px;height:16px;background:#ebebeb;"></div>
<div class="r" style="left:1276px;top:110px;width:276px;height:1.2px;background:#c8c8c8;"></div>
<div class="t" style="left:1279px;top:98.11px;font-size:10.5px;line-height:10.5px;color:#000;font-weight:normal;font-style:normal;transform:scaleX(0.9495);">Диспетчер объектов</div>
<svg class="r" style="left:1542px;top:98px;" width="10" height="9" viewBox="0 0 10 9"><path d="M1,1 L4,4.5 L1,8 Z M5,1 L8,4.5 L5,8 Z" fill="#b0b0c0"/><path d="M4,1 V8 M8,1 V8" stroke="#b0b0c0" stroke-width="0.8"/></svg>
<svg class="r" style="left:1556px;top:98px;" width="9" height="9" viewBox="0 0 9 9"><path d="M1,1 L8,8 M8,1 L1,8" stroke="#b8b8c0" stroke-width="1.1"/></svg>
<div class="r" style="left:1281px;top:117px;width:19px;height:19px;background:#fafafa;box-sizing:border-box;border:1px solid #c8c8c8"></div>
<svg class="r" style="left:1283px;top:119px;" width="15" height="15" viewBox="0 0 15 15"><path d="M1,3 L2.5,4.5 L4.5,2 M1,8 L2.5,9.5 L4.5,7 M1,13 L2.5,14.5 L4.5,12" stroke="#2aa02a" stroke-width="1.3" fill="none"/><path d="M6,4 L13,2 L11,7 L4,9 Z M6,9 L13,7 L11,12 L4,14 Z" fill="none" stroke="#6a74a8" stroke-width="0.9"/></svg>
<div class="r" style="left:1304px;top:117px;width:19px;height:19px;background:#fafafa;box-sizing:border-box;border:1px solid #c8c8c8"></div>
<svg class="r" style="left:1306px;top:119px;" width="15" height="15" viewBox="0 0 15 15"><path d="M1,4 L8,6 L14,4 M1,7 L8,9 L14,7 M1,10 L8,12 L14,10" fill="none" stroke="#6a74a8" stroke-width="0.9"/><path d="M7,7 L12,2" stroke="#2a2a3a" stroke-width="1.3"/><rect x="10" y="1" width="4" height="4" fill="#000" transform="rotate(45 12 3)"/></svg>
<svg class="r" style="left:1329px;top:118px;" width="16" height="17" viewBox="0 0 16 17"><path d="M1,2 V13" stroke="#6a74a8" stroke-dasharray="1,1"/><path d="M3,5 L9,2 L13,4 L7,8 Z M3,9 L9,6 L13,8 L7,12 Z" fill="none" stroke="#6a74a8" stroke-width="0.9"/><path d="M12,16 L16,12 V16 Z" fill="#000"/></svg>
<div class="t" style="left:1358px;top:115.61px;font-size:10.5px;line-height:10.5px;color:#000;font-weight:normal;font-style:normal;transform:scaleX(0.9229);">Страница 1</div>
<div class="t" style="left:1358px;top:127.61px;font-size:10.5px;line-height:10.5px;color:#000;font-weight:normal;font-style:normal;transform:scaleX(0.9625);">Слой 1</div>
<svg class="r" style="left:1534px;top:117px;" width="6" height="9" viewBox="0 0 6 9"><path d="M1,1 L5,4.5 L1,8 Z" fill="#000"/></svg>
<div class="r" style="left:1281px;top:141px;width:266px;height:668px;background:#fff;box-sizing:border-box;border:1px solid #6e6e6e;border-top:2px solid #7a7a7a"></div>
<div class="r" style="left:1282px;top:143px;width:264px;height:15px;background:#d8e4f2;"></div>
<div class="r" style="left:1282px;top:203px;width:264px;height:15px;background:#d8e4f2;"></div>
<div class="r" style="left:1282px;top:157.5px;width:264px;height:1px;background:#d4d4d4;"></div>
<div class="r" style="left:1282px;top:172.5px;width:264px;height:1px;background:#d4d4d4;"></div>
<div class="r" style="left:1282px;top:202.5px;width:264px;height:1px;background:#d4d4d4;"></div>
<div class="r" style="left:1282px;top:217.5px;width:264px;height:1px;background:#d4d4d4;"></div>
<div class="r" style="left:1282px;top:232.5px;width:264px;height:1px;background:#d4d4d4;"></div>
<div class="r" style="left:1282px;top:247.5px;width:264px;height:1px;background:#d4d4d4;"></div>
<svg class="r" style="left:1287px;top:145px;" width="10" height="10" viewBox="0 0 10 10"><rect x="0.5" y="0.5" width="8" height="8" fill="#fff" stroke="#4a4a6a" stroke-width="1"/><path d="M2.5,4.5 H6.5" stroke="#2a2a3a" stroke-width="1"/></svg>
<svg class="r" style="left:1302px;top:144px;" width="11" height="12" viewBox="0 0 11 12"><path d="M1,1 H7 L9,3 V11 H1 Z" fill="#d8ece6" stroke="#3a3a5a" stroke-width="1"/></svg>
<div class="t" style="left:1316px;top:144.81px;font-size:10.5px;line-height:10.5px;color:#000;font-weight:bold;font-style:normal;transform:scaleX(0.8821);">Страница 1</div>
<svg class="r" style="left:1316px;top:160px;" width="11" height="10" viewBox="0 0 11 10"><ellipse cx="5.5" cy="5" rx="5" ry="3" fill="#e0e0e8"/><ellipse cx="5.5" cy="4.5" rx="4.5" ry="2.5" fill="#5a5a6a"/><circle cx="5.5" cy="4.6" r="1.6" fill="#1a1a1a"/></svg>
<svg class="r" style="left:1330px;top:159px;" width="11" height="11" viewBox="0 0 11 11"><rect x="1" y="4" width="9" height="6" fill="#f4f4f4" stroke="#8a8a9a" stroke-width="0.8"/><circle cx="5.5" cy="4.5" r="3.8" fill="none" stroke="#e01010" stroke-width="1.4"/><path d="M2.8,2 L8.2,7" stroke="#e01010" stroke-width="1.4"/></svg>
<svg class="r" style="left:1343px;top:159px;" width="11" height="11" viewBox="0 0 11 11"><path d="M1,10 L2,7 L8,1 L10,3 L4,9 Z" fill="#5a5a6a"/><path d="M1,10 L2,7 L4,9 Z" fill="#c8c8d0"/></svg>
<div class="r" style="left:1354px;top:159px;width:13px;height:10px;background:#0000ff;"></div>
<div class="t" style="left:1373px;top:158.81px;font-size:10.5px;line-height:10.5px;color:#1a1a1a;font-weight:normal;font-style:italic;transform:scaleX(0.9482);">Направляющие</div>
<svg class="r" style="left:1303px;top:175px;" width="10" height="10" viewBox="0 0 10 10"><rect x="0.5" y="0.5" width="8" height="8" fill="#fff" stroke="#4a4a6a" stroke-width="1"/><path d="M2.5,4.5 H6.5" stroke="#2a2a3a" stroke-width="1"/></svg>
<svg class="r" style="left:1316px;top:175px;" width="11" height="10" viewBox="0 0 11 10"><ellipse cx="5.5" cy="5" rx="5" ry="3" fill="#e0e0e8"/><ellipse cx="5.5" cy="4.5" rx="4.5" ry="2.5" fill="#5a5a6a"/><circle cx="5.5" cy="4.6" r="1.6" fill="#1a1a1a"/></svg>
<svg class="r" style="left:1330px;top:174px;" width="11" height="11" viewBox="0 0 11 11"><rect x="3" y="1" width="5" height="4" fill="#fff" stroke="#6a6a7a" stroke-width="0.8"/><rect x="1" y="5" width="9" height="5" fill="#fff" stroke="#4a4a5a" stroke-width="1"/><rect x="2" y="5" width="7" height="1.5" fill="#2a2a3a"/></svg>
<svg class="r" style="left:1343px;top:174px;" width="11" height="11" viewBox="0 0 11 11"><path d="M1,10 L2,7 L8,1 L10,3 L4,9 Z" fill="#5a5a6a"/><path d="M1,10 L2,7 L4,9 Z" fill="#c8c8d0"/></svg>
<div class="r" style="left:1354px;top:174px;width:13px;height:10px;background:#111;"></div>
<div class="t" style="left:1373px;top:173.81px;font-size:10.5px;line-height:10.5px;color:#ff0000;font-weight:bold;font-style:normal;transform:scaleX(0.8954);">Слой 1</div>
<svg class="r" style="left:1333px;top:188px;" width="12" height="13" viewBox="0 0 12 13"><path d="M2,2 H9 V12 H2 Z" fill="#fff" stroke="#2a2a3a" stroke-width="1.2"/><path d="M9,1 L11,3 M4,1 L2,3" stroke="#2a2a3a"/><path d="M5,10 C5,7 8,7 8,10 Z" fill="#1a1a1a"/><circle cx="6.5" cy="6.5" r="1.2" fill="#1a1a1a"/></svg>
<div class="r" style="left:1347px;top:188px;width:59px;height:14px;background:#99c3ea;"></div>
<div class="t" style="left:1349px;top:188.81px;font-size:10.5px;line-height:10.5px;color:#fff;font-weight:normal;font-style:normal;transform:scaleX(0.8844);">Растр (RGB)</div>
<svg class="r" style="left:1287px;top:205px;" width="10" height="10" viewBox="0 0 10 10"><rect x="0.5" y="0.5" width="8" height="8" fill="#fff" stroke="#4a4a6a" stroke-width="1"/><path d="M2.5,4.5 H6.5" stroke="#2a2a3a" stroke-width="1"/></svg>
<svg class="r" style="left:1302px;top:204px;" width="11" height="12" viewBox="0 0 11 12"><path d="M1,1 H7 L9,3 V11 H1 Z" fill="#d8ece6" stroke="#3a3a5a" stroke-width="1"/></svg>
<div class="t" style="left:1316px;top:204.81px;font-size:10.5px;line-height:10.5px;color:#000;font-weight:bold;font-style:normal;transform:scaleX(1.0205);">Главная страница</div>
<svg class="r" style="left:1316px;top:220px;" width="11" height="10" viewBox="0 0 11 10"><ellipse cx="5.5" cy="5" rx="5" ry="3" fill="#e0e0e8"/><ellipse cx="5.5" cy="4.5" rx="4.5" ry="2.5" fill="#5a5a6a"/><circle cx="5.5" cy="4.6" r="1.6" fill="#1a1a1a"/></svg>
<svg class="r" style="left:1330px;top:219px;" width="11" height="11" viewBox="0 0 11 11"><rect x="1" y="4" width="9" height="6" fill="#f4f4f4" stroke="#8a8a9a" stroke-width="0.8"/><circle cx="5.5" cy="4.5" r="3.8" fill="none" stroke="#e01010" stroke-width="1.4"/><path d="M2.8,2 L8.2,7" stroke="#e01010" stroke-width="1.4"/></svg>
<svg class="r" style="left:1343px;top:219px;" width="11" height="11" viewBox="0 0 11 11"><path d="M1,10 L2,7 L8,1 L10,3 L4,9 Z" fill="#5a5a6a"/><path d="M1,10 L2,7 L4,9 Z" fill="#c8c8d0"/></svg>
<div class="r" style="left:1354px;top:219px;width:13px;height:10px;background:#0000ff;"></div>
<div class="t" style="left:1373px;top:218.81px;font-size:10.5px;line-height:10.5px;color:#3a64c4;font-weight:normal;font-style:italic;transform:scaleX(0.9295);">Направляющие (все страницы)</div>
<svg class="r" style="left:1316px;top:235px;" width="11" height="10" viewBox="0 0 11 10"><ellipse cx="5.5" cy="5" rx="5" ry="3" fill="#e0e0e8"/><ellipse cx="5.5" cy="4.5" rx="4.5" ry="2.5" fill="#5a5a6a"/><circle cx="5.5" cy="4.6" r="1.6" fill="#1a1a1a"/></svg>
<svg class="r" style="left:1330px;top:234px;" width="11" height="11" viewBox="0 0 11 11"><rect x="1" y="4" width="9" height="6" fill="#f4f4f4" stroke="#8a8a9a" stroke-width="0.8"/><circle cx="5.5" cy="4.5" r="3.8" fill="none" stroke="#e01010" stroke-width="1.4"/><path d="M2.8,2 L8.2,7" stroke="#e01010" stroke-width="1.4"/></svg>
<svg class="r" style="left:1343px;top:234px;" width="11" height="11" viewBox="0 0 11 11"><path d="M1,10 L2,7 L8,1 L10,3 L4,9 Z" fill="#5a5a6a"/><path d="M1,10 L2,7 L4,9 Z" fill="#c8c8d0"/></svg>
<div class="r" style="left:1354px;top:234px;width:13px;height:10px;background:#111;"></div>
<div class="t" style="left:1373px;top:233.81px;font-size:10.5px;line-height:10.5px;color:#3a64c4;font-weight:normal;font-style:italic;transform:scaleX(0.8051);">Рабочий стол</div>
<svg class="r" style="left:1316px;top:250px;" width="11" height="10" viewBox="0 0 11 10"><ellipse cx="5.5" cy="5.5" rx="5" ry="2.8" fill="#c8c8d0" stroke="#7a7a8a" stroke-width="0.8"/></svg>
<svg class="r" style="left:1330px;top:249px;" width="11" height="11" viewBox="0 0 11 11"><rect x="1" y="4" width="9" height="6" fill="#f4f4f4" stroke="#8a8a9a" stroke-width="0.8"/><circle cx="5.5" cy="4.5" r="3.8" fill="none" stroke="#e01010" stroke-width="1.4"/><path d="M2.8,2 L8.2,7" stroke="#e01010" stroke-width="1.4"/></svg>
<svg class="r" style="left:1343px;top:249px;" width="11" height="11" viewBox="0 0 11 11"><path d="M1,10 L2,7 L8,1 L10,3 L4,9 Z" fill="#5a5a6a"/><circle cx="6" cy="5" r="3.8" fill="none" stroke="#e01010" stroke-width="1.4"/><path d="M3.3,2.5 L8.7,7.5" stroke="#e01010" stroke-width="1.4"/></svg>
<div class="r" style="left:1354px;top:249px;width:13px;height:10px;background:#c4c4c4;"></div>
<div class="t" style="left:1373px;top:248.81px;font-size:10.5px;line-height:10.5px;color:#3a64c4;font-weight:normal;font-style:italic;transform:scaleX(0.9133);">Сетка</div>
<svg class="r" style="left:1282px;top:814px;" width="17" height="17" viewBox="0 0 17 17"><path d="M1,6 L8,3 L14,6 L7,9 Z M1,9 L7,12 L14,9 M1,12 L7,15 L14,12" fill="none" stroke="#5a64a0" stroke-width="1.1"/><circle cx="12.5" cy="4" r="3" fill="#2aa02a"/></svg>
<svg class="r" style="left:1304px;top:814px;" width="17" height="17" viewBox="0 0 17 17"><path d="M1,6 L8,3 L14,6 L7,9 Z M1,9 L7,12 L14,9 M1,12 L7,15 L14,12" fill="none" stroke="#5a64a0" stroke-width="1.1"/><path d="M6,12 L11,6" stroke="#f08a10" stroke-width="2.5"/><circle cx="12.5" cy="4" r="3" fill="#2aa02a"/></svg>
<svg class="r" style="left:1327px;top:814px;" width="17" height="17" viewBox="0 0 17 17"><path d="M1,6 L8,3 L14,6 L7,9 Z M1,9 L7,12 L14,9 M1,12 L7,15 L14,12" fill="none" stroke="#5a64a0" stroke-width="1.1"/><path d="M6,12 L11,6" stroke="#f08a10" stroke-width="2.5"/><circle cx="12.5" cy="4" r="3" fill="#2aa02a"/></svg>
<svg class="r" style="left:1351px;top:814px;" width="17" height="17" viewBox="0 0 17 17"><path d="M1,6 L8,3 L14,6 L7,9 Z M1,9 L7,12 L14,9 M1,12 L7,15 L14,12" fill="none" stroke="#c8c8d0" stroke-width="1.1"/></svg>
<svg class="r" style="left:1524px;top:814px;" width="14" height="16" viewBox="0 0 14 16"><path d="M2,4 H12 M5,4 V2 H9 V4" fill="none" stroke="#5a5a78" stroke-width="1.2"/><path d="M3,5 L4,14 H10 L11,5" fill="none" stroke="#5a5a78" stroke-width="1.3"/><path d="M6,7 V12 M8,7 V12" stroke="#5a5a78"/></svg>
<div class="r" style="left:1549px;top:110px;width:3px;height:728px;background:#ebebeb;"></div>
<div class="r" style="left:1552px;top:110px;width:16px;height:123px;background:#a9a9a9;"></div>
<div class="r" style="left:1552px;top:235px;width:16px;height:113px;background:#d6d6d6;"></div>
<div class="r" style="left:1552px;top:348px;width:16px;height:490px;background:#ebebeb;"></div>
<div class="r" style="left:1567px;top:110px;width:1px;height:728px;background:#d8d8d8;"></div>
<svg class="r" style="left:1553px;top:112px;" width="14" height="16" viewBox="0 0 14 16"><circle cx="3" cy="4" r="1.8" fill="none" stroke="#5a5a80"/><rect x="6" y="1" width="4" height="4" fill="#e8e8f0" stroke="#5a5a80" stroke-width="0.8"/><circle cx="11" cy="9" r="1.8" fill="none" stroke="#5a5a80"/><circle cx="11" cy="14" r="1.8" fill="none" stroke="#5a5a80"/><path d="M3,6 V15" stroke="#5a5a80" stroke-dasharray="1,1"/></svg>
<div class="t" style="left:1566px;top:130px;font-size:10.5px;line-height:11px;color:#000;transform:rotate(90deg) scaleX(0.951);transform-origin:0 0">Диспетчер объек...</div>
<svg class="r" style="left:1553px;top:238px;" width="14" height="14" viewBox="0 0 14 14"><path d="M3,6 C2,12 10,13 11,9" fill="none" stroke="#3a3a5a" stroke-width="1.2"/><path d="M7,1 V7 M4,4 H10" stroke="#3a3a5a" stroke-width="1.2"/></svg>
<div class="t" style="left:1566px;top:259px;font-size:10.5px;line-height:11px;color:#000;transform:rotate(90deg) scaleX(0.904);transform-origin:0 0">Преобразования</div>
<svg class="r" style="left:1552px;top:362px;" width="16" height="16" viewBox="0 0 16 16"><circle cx="8" cy="8" r="6.5" fill="none" stroke="#c4c4c4" stroke-width="1.1"/><path d="M8,3 V13 M3,8 H13" stroke="#c4c4c4" stroke-width="1.1"/></svg>
<div class="r" style="left:1568px;top:94px;width:32px;height:744px;background:#f3f3f3;"></div>
<div class="r" style="left:1584px;top:94px;width:1px;height:744px;background:#e4e4e4;"></div>
<svg class="r" style="left:1569px;top:96px;" width="15" height="4" viewBox="0 0 15 4"><path d="M2,2 H13" stroke="#8a8a8a" stroke-dasharray="1,2"/></svg>
<svg class="r" style="left:1572px;top:102px;" width="10" height="10" viewBox="0 0 10 10"><path d="M2,1 L8,5 L2,9 Z" fill="#000"/></svg>
<svg class="r" style="left:1569px;top:113px;" width="15" height="12" viewBox="0 0 15 12"><path d="M2,11 L9,4" stroke="#c8c8c8" stroke-width="1.8"/><circle cx="10.5" cy="3" r="2.2" fill="#c8c8c8"/></svg>
<svg class="r" style="left:1569px;top:126px;" width="15" height="9" viewBox="0 0 15 9"><path d="M3,7 L7.5,2.5 L12,7" fill="none" stroke="#c8c8d8" stroke-width="1.1"/></svg>
<div class="r" style="left:1569px;top:140px;width:15px;height:14px;background:#fff;box-sizing:border-box;border:1px solid #5a5a5a"></div>
<svg class="r" style="left:1569px;top:140px;" width="15" height="14" viewBox="0 0 15 14"><path d="M1,1 L14,13 M14,1 L1,13" stroke="#000" stroke-width="0.9"/></svg>
<svg class="r" style="left:1585px;top:96px;" width="15" height="4" viewBox="0 0 15 4"><path d="M2,2 H13" stroke="#8a8a8a" stroke-dasharray="1,2"/></svg>
<svg class="r" style="left:1588px;top:102px;" width="10" height="10" viewBox="0 0 10 10"><path d="M2,1 L8,5 L2,9 Z" fill="#000"/></svg>
<svg class="r" style="left:1585px;top:113px;" width="15" height="12" viewBox="0 0 15 12"><path d="M2,11 L9,4" stroke="#c8c8c8" stroke-width="1.8"/><circle cx="10.5" cy="3" r="2.2" fill="#c8c8c8"/></svg>
<svg class="r" style="left:1585px;top:126px;" width="15" height="9" viewBox="0 0 15 9"><path d="M3,7 L7.5,2.5 L12,7" fill="none" stroke="#c8c8d8" stroke-width="1.1"/></svg>
<div class="r" style="left:1585px;top:140px;width:15px;height:14px;background:#fff;box-sizing:border-box;border:1px solid #5a5a5a"></div>
<svg class="r" style="left:1585px;top:140px;" width="15" height="14" viewBox="0 0 15 14"><path d="M1,1 L14,13 M14,1 L1,13" stroke="#000" stroke-width="0.9"/></svg>
<div class="r" style="left:1569px;top:154px;width:15px;height:14px;background:#e8238f;box-sizing:border-box;border:1px solid #5a5a5a"></div>
<div class="r" style="left:1572px;top:163px;width:4px;height:4px;background:#d8d8d8;box-sizing:border-box;border:1px solid #6a6a6a"></div>
<div class="r" style="left:1569px;top:168px;width:15px;height:14px;background:#a09a97;box-sizing:border-box;border:1px solid #5a5a5a"></div>
<div class="r" style="left:1572px;top:177px;width:4px;height:4px;background:#d8d8d8;box-sizing:border-box;border:1px solid #6a6a6a"></div>
<div class="r" style="left:1569px;top:182px;width:15px;height:14px;background:#7fa1ae;box-sizing:border-box;border:1px solid #5a5a5a"></div>
<div class="r" style="left:1572px;top:191px;width:4px;height:4px;background:#d8d8d8;box-sizing:border-box;border:1px solid #6a6a6a"></div>
<div class="r" style="left:1569px;top:196px;width:15px;height:14px;background:#627d86;box-sizing:border-box;border:1px solid #5a5a5a"></div>
<div class="r" style="left:1572px;top:205px;width:4px;height:4px;background:#d8d8d8;box-sizing:border-box;border:1px solid #6a6a6a"></div>
<div class="r" style="left:1585px;top:154.0px;width:15px;height:14.41px;background:#1a1a1a;"></div>
<div class="r" style="left:1585px;top:167.61px;width:15px;height:1px;background:rgba(60,60,60,0.35);"></div>
<div class="r" style="left:1585px;top:168.11px;width:15px;height:14.41px;background:#3c3c3c;"></div>
<div class="r" style="left:1585px;top:181.72px;width:15px;height:1px;background:rgba(60,60,60,0.35);"></div>
<div class="r" style="left:1585px;top:182.22px;width:15px;height:14.41px;background:#555555;"></div>
<div class="r" style="left:1585px;top:195.83px;width:15px;height:1px;background:rgba(60,60,60,0.35);"></div>
<div class="r" style="left:1585px;top:196.33px;width:15px;height:14.41px;background:#6a6a6a;"></div>
<div class="r" style="left:1585px;top:209.93px;width:15px;height:1px;background:rgba(60,60,60,0.35);"></div>
<div class="r" style="left:1585px;top:210.43px;width:15px;height:14.41px;background:#808080;"></div>
<div class="r" style="left:1585px;top:224.04px;width:15px;height:1px;background:rgba(60,60,60,0.35);"></div>
<div class="r" style="left:1585px;top:224.54px;width:15px;height:14.41px;background:#959595;"></div>
<div class="r" style="left:1585px;top:238.15px;width:15px;height:1px;background:rgba(60,60,60,0.35);"></div>
<div class="r" style="left:1585px;top:238.65px;width:15px;height:14.41px;background:#aaaaaa;"></div>
<div class="r" style="left:1585px;top:252.26px;width:15px;height:1px;background:rgba(60,60,60,0.35);"></div>
<div class="r" style="left:1585px;top:252.76px;width:15px;height:14.41px;background:#c2c2c2;"></div>
<div class="r" style="left:1585px;top:266.37px;width:15px;height:1px;background:rgba(60,60,60,0.35);"></div>
<div class="r" style="left:1585px;top:266.87px;width:15px;height:14.41px;background:#d8d8d8;"></div>
<div class="r" style="left:1585px;top:280.48px;width:15px;height:1px;background:rgba(60,60,60,0.35);"></div>
<div class="r" style="left:1585px;top:280.98px;width:15px;height:14.41px;background:#e8e8e8;"></div>
<div class="r" style="left:1585px;top:294.59px;width:15px;height:1px;background:rgba(60,60,60,0.35);"></div>
<div class="r" style="left:1585px;top:295.09px;width:15px;height:14.41px;background:#ffffff;"></div>
<div class="r" style="left:1585px;top:308.7px;width:15px;height:1px;background:rgba(60,60,60,0.35);"></div>
<div class="r" style="left:1585px;top:309.2px;width:15px;height:14.41px;background:#3c2f8f;"></div>
<div class="r" style="left:1585px;top:322.8px;width:15px;height:1px;background:rgba(60,60,60,0.35);"></div>
<div class="r" style="left:1585px;top:323.3px;width:15px;height:14.41px;background:#0ea5dc;"></div>
<div class="r" style="left:1585px;top:336.91px;width:15px;height:1px;background:rgba(60,60,60,0.35);"></div>
<div class="r" style="left:1585px;top:337.41px;width:15px;height:14.41px;background:#00a651;"></div>
<div class="r" style="left:1585px;top:351.02px;width:15px;height:1px;background:rgba(60,60,60,0.35);"></div>
<div class="r" style="left:1585px;top:351.52px;width:15px;height:14.41px;background:#ffde17;"></div>
<div class="r" style="left:1585px;top:365.13px;width:15px;height:1px;background:rgba(60,60,60,0.35);"></div>
<div class="r" style="left:1585px;top:365.63px;width:15px;height:14.41px;background:#e03222;"></div>
<div class="r" style="left:1585px;top:379.24px;width:15px;height:1px;background:rgba(60,60,60,0.35);"></div>
<div class="r" style="left:1585px;top:379.74px;width:15px;height:14.41px;background:#e6007e;"></div>
<div class="r" style="left:1585px;top:393.35px;width:15px;height:1px;background:rgba(60,60,60,0.35);"></div>
<div class="r" style="left:1585px;top:393.85px;width:15px;height:14.41px;background:#a54897;"></div>
<div class="r" style="left:1585px;top:407.46px;width:15px;height:1px;background:rgba(60,60,60,0.35);"></div>
<div class="r" style="left:1585px;top:407.96px;width:15px;height:14.41px;background:#f7860f;"></div>
<div class="r" style="left:1585px;top:421.57px;width:15px;height:1px;background:rgba(60,60,60,0.35);"></div>
<div class="r" style="left:1585px;top:422.07px;width:15px;height:14.41px;background:#f9b9c0;"></div>
<div class="r" style="left:1585px;top:435.67px;width:15px;height:1px;background:rgba(60,60,60,0.35);"></div>
<div class="r" style="left:1585px;top:436.17px;width:15px;height:14.41px;background:#7d6e66;"></div>
<div class="r" style="left:1585px;top:449.78px;width:15px;height:1px;background:rgba(60,60,60,0.35);"></div>
<div class="r" style="left:1585px;top:450.28px;width:15px;height:14.41px;background:#dcd7f0;"></div>
<div class="r" style="left:1585px;top:463.89px;width:15px;height:1px;background:rgba(60,60,60,0.35);"></div>
<div class="r" style="left:1585px;top:464.39px;width:15px;height:14.41px;background:#a99ee0;"></div>
<div class="r" style="left:1585px;top:478.0px;width:15px;height:1px;background:rgba(60,60,60,0.35);"></div>
<div class="r" style="left:1585px;top:478.5px;width:15px;height:14.41px;background:#7b97d4;"></div>
<div class="r" style="left:1585px;top:492.11px;width:15px;height:1px;background:rgba(60,60,60,0.35);"></div>
<div class="r" style="left:1585px;top:492.61px;width:15px;height:14.41px;background:#8d77c4;"></div>
<div class="r" style="left:1585px;top:506.22px;width:15px;height:1px;background:rgba(60,60,60,0.35);"></div>
<div class="r" style="left:1585px;top:506.72px;width:15px;height:14.41px;background:#9a8eb4;"></div>
<div class="r" style="left:1585px;top:520.33px;width:15px;height:1px;background:rgba(60,60,60,0.35);"></div>
<div class="r" style="left:1585px;top:520.83px;width:15px;height:14.41px;background:#53689a;"></div>
<div class="r" style="left:1585px;top:534.43px;width:15px;height:1px;background:rgba(60,60,60,0.35);"></div>
<div class="r" style="left:1585px;top:534.93px;width:15px;height:14.41px;background:#5a5570;"></div>
<div class="r" style="left:1585px;top:548.54px;width:15px;height:1px;background:rgba(60,60,60,0.35);"></div>
<div class="r" style="left:1585px;top:549.04px;width:15px;height:14.41px;background:#7487a0;"></div>
<div class="r" style="left:1585px;top:562.65px;width:15px;height:1px;background:rgba(60,60,60,0.35);"></div>
<div class="r" style="left:1585px;top:563.15px;width:15px;height:14.41px;background:#0096d2;"></div>
<div class="r" style="left:1585px;top:576.76px;width:15px;height:1px;background:rgba(60,60,60,0.35);"></div>
<div class="r" style="left:1585px;top:577.26px;width:15px;height:14.41px;background:#ade0f2;"></div>
<div class="r" style="left:1585px;top:590.87px;width:15px;height:1px;background:rgba(60,60,60,0.35);"></div>
<div class="r" style="left:1585px;top:591.37px;width:15px;height:14.41px;background:#bccad4;"></div>
<div class="r" style="left:1585px;top:604.98px;width:15px;height:1px;background:rgba(60,60,60,0.35);"></div>
<div class="r" style="left:1585px;top:605.48px;width:15px;height:14.41px;background:#99a3a8;"></div>
<div class="r" style="left:1585px;top:619.09px;width:15px;height:1px;background:rgba(60,60,60,0.35);"></div>
<div class="r" style="left:1585px;top:619.59px;width:15px;height:14.41px;background:#6f7a7e;"></div>
<div class="r" style="left:1585px;top:633.2px;width:15px;height:1px;background:rgba(60,60,60,0.35);"></div>
<div class="r" style="left:1585px;top:633.7px;width:15px;height:14.41px;background:#3f4a4c;"></div>
<div class="r" style="left:1585px;top:647.3px;width:15px;height:1px;background:rgba(60,60,60,0.35);"></div>
<div class="r" style="left:1585px;top:647.8px;width:15px;height:14.41px;background:#547a72;"></div>
<div class="r" style="left:1585px;top:661.41px;width:15px;height:1px;background:rgba(60,60,60,0.35);"></div>
<div class="r" style="left:1585px;top:661.91px;width:15px;height:14.41px;background:#3d8278;"></div>
<div class="r" style="left:1585px;top:675.52px;width:15px;height:1px;background:rgba(60,60,60,0.35);"></div>
<div class="r" style="left:1585px;top:676.02px;width:15px;height:14.41px;background:#6f8e8a;"></div>
<div class="r" style="left:1585px;top:689.63px;width:15px;height:1px;background:rgba(60,60,60,0.35);"></div>
<div class="r" style="left:1585px;top:690.13px;width:15px;height:14.41px;background:#5aab98;"></div>
<div class="r" style="left:1585px;top:703.74px;width:15px;height:1px;background:rgba(60,60,60,0.35);"></div>
<div class="r" style="left:1585px;top:704.24px;width:15px;height:14.41px;background:#5e9e76;"></div>
<div class="r" style="left:1585px;top:717.85px;width:15px;height:1px;background:rgba(60,60,60,0.35);"></div>
<div class="r" style="left:1585px;top:718.35px;width:15px;height:14.41px;background:#74d0d6;"></div>
<div class="r" style="left:1585px;top:731.96px;width:15px;height:1px;background:rgba(60,60,60,0.35);"></div>
<div class="r" style="left:1585px;top:732.46px;width:15px;height:14.41px;background:#5aa8b8;"></div>
<div class="r" style="left:1585px;top:746.07px;width:15px;height:1px;background:rgba(60,60,60,0.35);"></div>
<div class="r" style="left:1585px;top:746.57px;width:15px;height:14.41px;background:#b2c2b6;"></div>
<div class="r" style="left:1585px;top:760.17px;width:15px;height:1px;background:rgba(60,60,60,0.35);"></div>
<div class="r" style="left:1585px;top:760.67px;width:15px;height:14.41px;background:#daf5de;"></div>
<div class="r" style="left:1585px;top:774.28px;width:15px;height:1px;background:rgba(60,60,60,0.35);"></div>
<div class="r" style="left:1585px;top:774.78px;width:15px;height:14.41px;background:#aeeab4;"></div>
<div class="r" style="left:1585px;top:788.39px;width:15px;height:1px;background:rgba(60,60,60,0.35);"></div>
<div class="r" style="left:1585px;top:788.89px;width:15px;height:14.41px;background:#98a29a;"></div>
<div class="r" style="left:1585px;top:802.5px;width:15px;height:1px;background:rgba(60,60,60,0.35);"></div>
<div class="r" style="left:1585px;top:154px;width:1px;height:649px;background:#5a5a5a;"></div>
<svg class="r" style="left:1569px;top:804px;" width="15" height="12" viewBox="0 0 15 12"><path d="M3,3 L7.5,7.5 L12,3" fill="none" stroke="#c8c8d8" stroke-width="1.3"/></svg>
<svg class="r" style="left:1569px;top:818px;" width="15" height="12" viewBox="0 0 15 12"><path d="M3,2 L6.5,6 L3,10 M8,2 L11.5,6 L8,10" fill="none" stroke="#b8b8cc" stroke-width="1.1"/></svg>
<svg class="r" style="left:1585px;top:804px;" width="15" height="12" viewBox="0 0 15 12"><path d="M3,3 L7.5,7.5 L12,3" fill="none" stroke="#9a9aac" stroke-width="1.3"/></svg>
<svg class="r" style="left:1585px;top:818px;" width="15" height="12" viewBox="0 0 15 12"><path d="M3,2 L6.5,6 L3,10 M8,2 L11.5,6 L8,10" fill="none" stroke="#b8b8cc" stroke-width="1.1"/></svg>
</body></html>
